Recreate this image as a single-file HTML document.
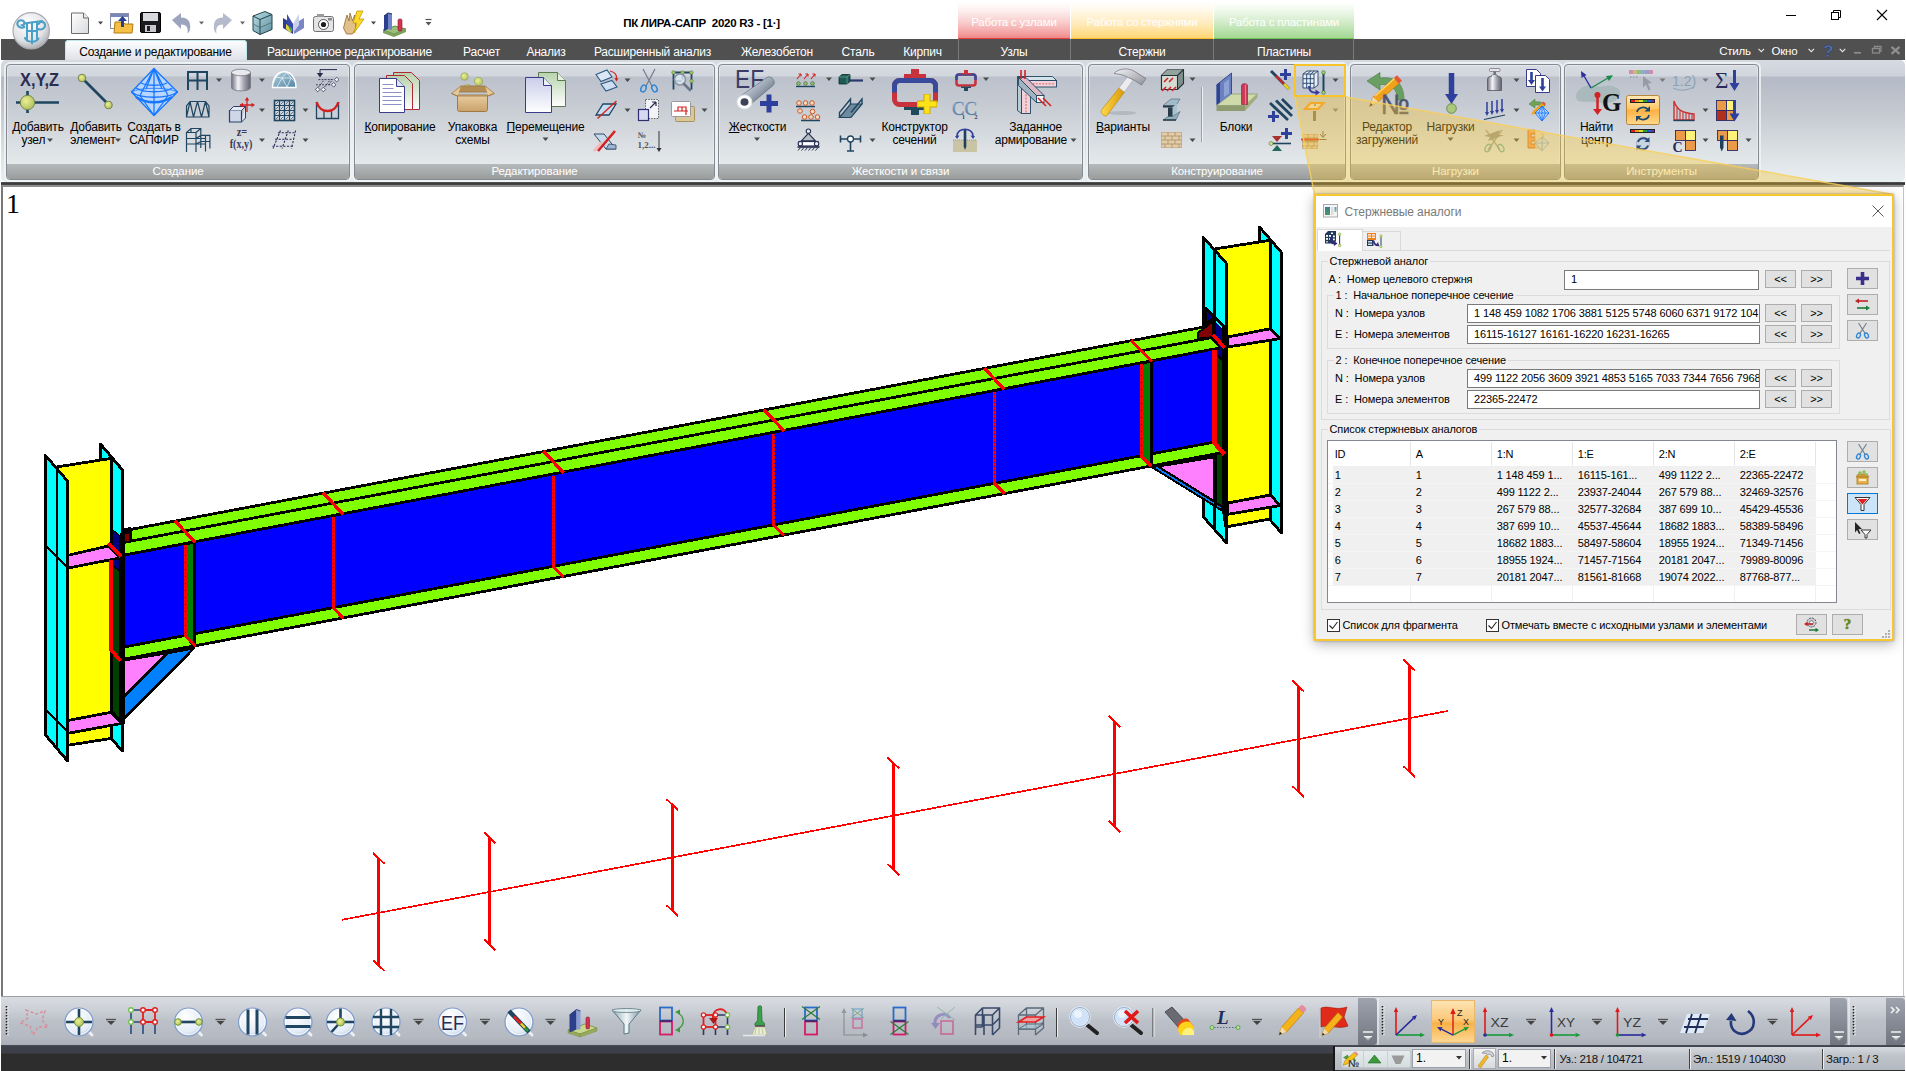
<!DOCTYPE html>
<html lang="ru">
<head>
<meta charset="utf-8">
<title>ПК ЛИРА-САПР 2020 R3</title>
<style>
html,body{margin:0;padding:0;background:#fff;}
body{width:1906px;height:1071px;overflow:hidden;position:relative;font-family:"Liberation Sans",sans-serif;font-size:12px;color:#000;}
.abs{position:absolute;}
#app{position:absolute;left:0;top:0;width:1906px;height:1071px;overflow:hidden;background:#fff;}
/* title bar */
#titlebar{position:absolute;left:0;top:0;width:1906px;height:39px;background:#fff;}
#title{position:absolute;left:561.5px;top:17px;width:280px;text-align:center;font-size:11.5px;font-weight:bold;color:#000;white-space:pre;letter-spacing:-0.25px;}
.ctx{position:absolute;top:2px;height:37px;color:#fff;font-size:11.5px;text-align:center;line-height:41px;letter-spacing:-0.2px;white-space:nowrap;}
/* tab bar */
#tabbar{position:absolute;left:1px;top:39px;width:1904px;height:21px;background:#505050;}
.tab{position:absolute;top:43.5px;height:16px;line-height:16px;color:#fff;font-size:12px;letter-spacing:-0.22px;white-space:nowrap;transform:translateX(-50%);}
#acttab{position:absolute;left:65px;top:40px;width:182px;height:21px;border-radius:4px 4px 0 0;background:linear-gradient(#fdfeff,#eef0f4 50%,#dde0e6);box-shadow:0 0 0 1px #bfe8ee inset;}
/* ribbon */
#ribbon{position:absolute;left:1px;top:60px;width:1904px;height:122px;border-radius:5px;background:linear-gradient(#d6dae1 0px,#cdd2da 16px,#b4bac6 17px,#c3c8d0 50px,#dde2e5 95px,#e8eff1 121px);}
#ribbonshadow{position:absolute;left:1px;top:182px;width:1904px;height:3px;background:linear-gradient(#5a5a5a,#3a3a3a 50%,#4a4a4a);}
.grp{position:absolute;top:64px;height:116px;border-radius:4px;box-sizing:border-box;border:1px solid #858a90;box-shadow:0 0 0 1px rgba(255,255,255,.35) inset, 0 0 0 2px rgba(240,246,247,.8);background:linear-gradient(rgba(255,255,255,.10),rgba(255,255,255,.10));overflow:hidden;}
.grp .cap{position:absolute;left:0;right:0;bottom:0;height:15px;background:linear-gradient(#b6baba,#9a9c9c);color:#fff;font-size:11.5px;text-align:center;line-height:14px;letter-spacing:-0.1px;}
.lbl{position:absolute;font-size:12px;line-height:13px;text-align:center;white-space:nowrap;transform:translateX(-50%);letter-spacing:-0.2px;color:#000;}
.dd{position:absolute;width:0;height:0;border-left:3px solid transparent;border-right:3px solid transparent;border-top:3px solid #555;margin-left:-3px;box-shadow:none;}
.ico{position:absolute;overflow:visible;}
/* viewport */
#view{position:absolute;left:1px;top:185px;width:1903px;height:811px;background:#fff;border-left:2px solid #777;border-top:2px solid #8f8f8f;border-right:1px solid #c4c4c4;box-sizing:border-box;}
/* bottom */
#btool{position:absolute;left:1px;top:997px;width:1904px;height:49px;background:linear-gradient(#d9dce1 0,#cfd3d9 10px,#bcc1c9 24px,#b4b9c2 40px,#a9aeb7 49px);}
#status{position:absolute;left:1px;top:1045px;width:1904px;height:26px;background:linear-gradient(#4a4d57 0,#3d4049 2px,#3d4049 8px,#2d2d2d 9px,#2d2d2d 100%);}
/* dialog */
#dlg{position:absolute;left:1314px;top:194px;width:580px;height:447px;box-sizing:border-box;border:2px solid #f8c630;background:#f0f0f0;box-shadow:0 3px 12px rgba(0,0,0,.30),0 0 2px rgba(0,0,0,.3);font-size:11px;letter-spacing:-0.12px;}
#dlg .t{position:absolute;white-space:nowrap;line-height:13px;}
#dlg .inp{position:absolute;background:#fff;border:1px solid #7a7a7a;box-sizing:border-box;overflow:hidden;white-space:nowrap;line-height:17px;padding-left:6px;}
#dlg .btn{position:absolute;background:#e1e1e1;border:1px solid #adadad;box-sizing:border-box;text-align:center;line-height:16px;}
#dlg .gb{position:absolute;border:1px solid #dcdcdc;box-sizing:border-box;}
#dlg .gbl{position:absolute;background:#f0f0f0;padding:0 2px;line-height:13px;white-space:nowrap;}
</style>
</head>
<body>
<div id="app">
<div id="titlebar">
 <!-- quick access icons -->
 <svg class="ico" style="left:60px;top:8px" width="400" height="30" viewBox="60 8 400 30">
  <defs>
   <linearGradient id="gdoc" x1="0" y1="0" x2="1" y2="1"><stop offset="0" stop-color="#ffffff"/><stop offset="1" stop-color="#d8dadd"/></linearGradient>
   <linearGradient id="gcube" x1="0" y1="0" x2="1" y2="1"><stop offset="0" stop-color="#b8dfe6"/><stop offset="1" stop-color="#5f8f9c"/></linearGradient>
  </defs>
  <!-- new -->
  <path d="M71.5 13 h12 l5 5 v15.5 h-17z" fill="url(#gdoc)" stroke="#6d6d6d"/><path d="M83.5 13 v5 h5" fill="#eee" stroke="#6d6d6d"/>
  <path d="M98 21.5h5l-2.5 3z" fill="#444"/>
  <!-- open -->
  <rect x="110.500" y="13.500" width="18" height="15" fill="#fff" stroke="#8a8fa8"/><rect x="111" y="14" width="17" height="3" fill="#7a86b8"/>
  <path d="M115 22 l-1 11 h18 l1 -9 h-8 l-2 -2z" fill="#f6c046" stroke="#b07a12"/>
  <path d="M121 27 v-6 h-3 l4.500 -5 l4.500 5 h-3 v6z" fill="#24408e"/>
  <!-- save -->
  <rect x="140.500" y="12.500" width="20" height="20" rx="1.500" fill="#1b1b1f" stroke="#000"/><rect x="143" y="13" width="15" height="8" fill="#d9dadd"/><rect x="145" y="25" width="11" height="7" fill="#c9c9cc"/><rect x="147" y="26" width="3" height="5" fill="#222"/>
  <!-- undo -->
  <path d="M172 20 l9 -7 v4.500 c7 0 10 4 9 12 c-0.500 2 -1.500 3 -2.500 4 c1 -6 -1 -9 -6.500 -9 v4.500z" fill="#8b94b3" opacity=".85"/>
  <path d="M199 21.500h5l-2.500 3z" fill="#666"/>
  <!-- redo -->
  <path d="M232 20 l-9 -7 v4.500 c-7 0 -10 4 -9 12 c0.500 2 1.500 3 2.500 4 c-1 -6 1 -9 6.500 -9 v4.500z" fill="#a3a9c0" opacity=".8"/>
  <path d="M240 21.500h5l-2.500 3z" fill="#666"/>
  <!-- cube -->
  <path d="M253 16 l12 -4.500 l7 3 v15 l-12 5 l-7 -4z" fill="url(#gcube)" stroke="#24424c"/><path d="M253 16 l7 3.500 l12 -5 M260 19.500 v15" fill="none" stroke="#24424c"/><path d="M253 24 l7 3.500 l12 -5" fill="none" stroke="#4a6a74" stroke-width=".8"/>
  <!-- book -->
  <path d="M283 18 l10 6 v10 l-10 -6z" fill="#2d3c94"/><path d="M304 18 l-10 6 v10 l10 -6z" fill="#7b86c6"/><path d="M287 14 l6 10 v9 l-6 -8z" fill="#3a4aa8"/><path d="M299 14 l-6 10 v9 l6 -8z" fill="#c9d0ee"/><path d="M286 24 l6 5 l-1 4 l-5 -4z" fill="#e8d23a"/><path d="M288 26 l4 3 l-1 3z" fill="#3aa84a"/>
  <!-- camera -->
  <rect x="313.500" y="16.500" width="20" height="15" rx="2" fill="#e4e4e6" stroke="#6f7073"/><rect x="317" y="14" width="7" height="3" fill="#9a9b9e"/><circle cx="323.500" cy="24.500" r="5" fill="#fff" stroke="#555"/><circle cx="323.500" cy="24.500" r="2.600" fill="#1c1c20"/><rect x="328" y="18" width="4" height="2.500" fill="#888"/>
  <!-- hand lightning -->
  <path d="M345 22 l2 -7 l2 6 l1 -8 l2.500 8 l2 -6 l1 8 v6 l-3 5 h-6 l-3 -6z" fill="#e2c089" stroke="#8d6b36" stroke-width=".8"/>
  <path d="M357 11 h6 l-4 8 h5 l-10 14 l3 -10 h-4z" fill="#ffd928" stroke="#c29a00" stroke-width=".8"/>
  <path d="M371 21.500h5l-2.500 3z" fill="#444"/>
  <!-- blocks -->
  <path d="M383 30 l12 -4 l11 3 l-12 5z" fill="#9cc07a" stroke="#4f7a32" stroke-width=".8"/><path d="M383 30 v3 l11 4 v-3z M394 34 v3 l12 -5 v-3z" fill="#7ca25c"/>
  <path d="M384 16 l4 -3 v16 l-4 2z" fill="#2c3f8c"/><path d="M388 13 l4 1 v16 l-4 -1z" fill="#6f83c9"/><path d="M384 16 l4 -3 l4 1" fill="none" stroke="#1c2a66"/>
  <rect x="398" y="19" width="4" height="12" rx="1.500" fill="#d0344f" stroke="#8a1a2c" stroke-width=".6"/>
  <!-- customize -->
  <path d="M425.500 19.500h6" stroke="#555" stroke-width="1.200"/><path d="M425.500 22 h6 l-3 3.500z" fill="#555"/>
 </svg>
 <div id="title">ПК ЛИРА-САПР  2020 R3 - [1·]</div>
 <div class="ctx" style="left:958px;width:112px;background:linear-gradient(#fff 0,#fdeeee 25%,#f9cccc 55%,#f3a0a0 85%,#f08a8a 96%,#e84040 97%,#e84040 100%);">Работа с узлами</div>
 <div class="ctx" style="left:1071px;width:142px;background:linear-gradient(#fff 0,#fff8e6 25%,#ffecc0 55%,#ffdd8c 85%,#ffd676 96%,#f7bd28 97%,#f7bd28 100%);">Работа со стержнями</div>
 <div class="ctx" style="left:1214px;width:140px;background:linear-gradient(#fff 0,#eef8ea 25%,#d2ecc9 55%,#b0dea2 85%,#a4d996 96%,#70c656 97%,#70c656 100%);">Работа с пластинами</div>
 <!-- window controls -->
 <svg class="ico" style="left:1770px;top:0" width="136" height="32" viewBox="1770 0 136 32">
  <path d="M1786 15.500h10" stroke="#000" stroke-width="1"/>
  <rect x="1831.500" y="12.500" width="7" height="7" fill="#fff" stroke="#000"/><path d="M1833.500 12.500v-2h7v7h-2" fill="none" stroke="#000"/>
  <path d="M1877 10 l10 10 M1887 10 l-10 10" stroke="#000" stroke-width="1.100"/>
 </svg>
</div>
<div id="tabbar"></div>
<div id="acttab"></div>
<div class="tab" style="left:155.500px;color:#000">Создание и редактирование</div>
<div class="tab" style="left:349.500px">Расширенное редактирование</div>
<div class="tab" style="left:481.500px">Расчет</div>
<div class="tab" style="left:546px">Анализ</div>
<div class="tab" style="left:652.500px">Расширенный анализ</div>
<div class="tab" style="left:777px">Железобетон</div>
<div class="tab" style="left:858px">Сталь</div>
<div class="tab" style="left:922.500px">Кирпич</div>
<div class="tab" style="left:1014px">Узлы</div>
<div class="tab" style="left:1142px">Стержни</div>
<div class="tab" style="left:1284px">Пластины</div>
<div class="abs" style="left:958px;top:39px;width:1px;height:21px;background:#7a7a7a"></div>
<div class="abs" style="left:1070px;top:39px;width:1px;height:21px;background:#7a7a7a"></div>
<div class="abs" style="left:1213px;top:39px;width:1px;height:21px;background:#7a7a7a"></div>
<div class="abs" style="left:1353px;top:39px;width:1px;height:21px;background:#7a7a7a"></div>
<div class="tab" style="left:1735px;top:42.5px;font-size:11.5px">Стиль</div>
<div class="tab" style="left:1784.500px;top:42.5px;font-size:11.5px">Окно</div>
<svg class="ico" style="left:1750px;top:40px" width="156" height="20" viewBox="1750 40 156 20">
 <path d="M1758.500 48.800l2.800 2.800l2.800-2.800M1808.500 48.800l2.800 2.800l2.800-2.800M1839.700 48.800l2.800 2.800l2.800-2.800" fill="none" stroke="#e8e8e8" stroke-width="1.100"/>
 <text x="1823" y="56.500" font-family="Liberation Sans, sans-serif" font-size="17" font-weight="bold" fill="#5873ad" stroke="#2a3c68" stroke-width=".5">?</text>
 <path d="M1854 52.800h7" stroke="#8a8a8a" stroke-width="1.800"/>
 <rect x="1872.500" y="48.500" width="7" height="4.500" fill="none" stroke="#8a8a8a" stroke-width="1.300"/><path d="M1874.500 48v-1.500h6.500v4.500h-1.500" fill="none" stroke="#8a8a8a" stroke-width="1.300"/>
 <path d="M1891.500 46.800l8 7M1899.500 46.800l-8 7" stroke="#8f8f8f" stroke-width="2.200"/>
</svg>
<!-- app button -->
<svg class="ico" style="left:8px;top:6px" width="48" height="48" viewBox="8 6 48 48">
 <defs><radialGradient id="gapp" cx=".4" cy=".3" r=".8"><stop offset="0" stop-color="#ffffff"/><stop offset=".6" stop-color="#e2e3e6"/><stop offset="1" stop-color="#9a9ca3"/></radialGradient></defs>
 <circle cx="31.200" cy="30.800" r="18.200" fill="url(#gapp)" stroke="#a8abb2" stroke-width="1.200"/>
 <g fill="none" stroke="#4aa0c8" stroke-width="2" stroke-linecap="round"><path d="M24.500 27c-4 2-8-1-7-4.500c1-3 6-3 7 0c.5 2-1.500 3.500-3 2.500"/><path d="M24 23.500l18-2.500"/><path d="M27 23.500v17M32 22.500v21M37 22v18"/><path d="M38 29c4 1.500 7.500-1 7-4.500c-.5-3-5-3.500-6.500-.5"/><path d="M25 38c1.500 4.500 11 5 13.500 .5"/><path d="M27 31h10"/></g>
 </svg>
<div id="ribbon"></div>
<div id="ribbonshadow"></div>
<div class="grp" style="left:6px;width:344px"><div class="cap">Создание</div></div>
<div class="grp" style="left:354px;width:361px"><div class="cap">Редактирование</div></div>
<div class="grp" style="left:718px;width:365px"><div class="cap">Жесткости и связи</div></div>
<div class="grp" style="left:1088px;width:258px"><div class="cap">Конструирование</div></div>
<div class="grp" style="left:1350px;width:211px"><div class="cap">Нагрузки</div></div>
<div class="grp" style="left:1564px;width:195px"><div class="cap">Инструменты</div></div>
<!-- labels -->
<div class="lbl" style="left:38px;top:121px">Добавить<br>узел&nbsp;&nbsp;&nbsp;</div>
<div class="lbl" style="left:96px;top:121px">Добавить<br>элемент&nbsp;&nbsp;</div>
<div class="lbl" style="left:154px;top:121px">Создать в<br>САПФИР</div>
<div class="lbl" style="left:400px;top:121px"><u>К</u>опирование</div>
<div class="lbl" style="left:472.500px;top:121px">Упаковка<br>схемы</div>
<div class="lbl" style="left:545.500px;top:121px"><u>П</u>еремещение</div>
<div class="lbl" style="left:757.500px;top:121px"><u>Ж</u>есткости</div>
<div class="lbl" style="left:914.500px;top:121px">Конструктор<br>сечений</div>
<div class="lbl" style="left:1034px;top:121px">&nbsp;Заданное<br>армирование&nbsp;&nbsp;</div>
<div class="lbl" style="left:1123px;top:121px"><u>В</u>арианты</div>
<div class="lbl" style="left:1236px;top:121px">Блоки</div>
<div class="lbl" style="left:1387px;top:121px">Редактор<br>загружений</div>
<div class="lbl" style="left:1450.500px;top:121px">Нагрузки</div>
<div class="lbl" style="left:1596.500px;top:121px">Найти<br>центр</div>
<svg class="ico" style="left:0;top:60px" width="1906" height="122" viewBox="0 60 1906 122">
<defs>
 <radialGradient id="gnode" cx=".4" cy=".4" r=".7"><stop offset="0" stop-color="#eef08f"/><stop offset="1" stop-color="#a9b85e"/></radialGradient>
 <linearGradient id="gcyl" x1="0" y1="0" x2="1" y2="0"><stop offset="0" stop-color="#70707e"/><stop offset=".35" stop-color="#f4f4f8"/><stop offset=".7" stop-color="#9a9aa8"/><stop offset="1" stop-color="#60606e"/></linearGradient><linearGradient id="gdome" x1="0" y1="0" x2="1" y2="1"><stop offset="0" stop-color="#b4d2de"/><stop offset="1" stop-color="#4f84a4"/></linearGradient>
 <linearGradient id="gpage" x1="0" y1="0" x2="0" y2="1"><stop offset="0" stop-color="#c9cdea"/><stop offset="1" stop-color="#ffffff"/></linearGradient>
 <linearGradient id="gpageg" x1="0" y1="0" x2="0" y2="1"><stop offset="0" stop-color="#b7d3ad"/><stop offset="1" stop-color="#ffffff"/></linearGradient>
 <linearGradient id="gbox" x1="0" y1="0" x2="0" y2="1"><stop offset="0" stop-color="#e9cda0"/><stop offset="1" stop-color="#c9a26a"/></linearGradient>
 <linearGradient id="gpipe" x1="0" y1="0" x2="1" y2="1"><stop offset="0" stop-color="#ffffff"/><stop offset=".5" stop-color="#9aa6b4"/><stop offset="1" stop-color="#3a4654"/></linearGradient>
 <linearGradient id="gham" x1="0" y1="0" x2="1" y2="0"><stop offset="0" stop-color="#ffd84a"/><stop offset="1" stop-color="#d99a08"/></linearGradient>
 <linearGradient id="gsteel" x1="0" y1="0" x2="1" y2="1"><stop offset="0" stop-color="#f4f4f6"/><stop offset="1" stop-color="#8e9098"/></linearGradient>
 <linearGradient id="gorbtn" x1="0" y1="0" x2="0" y2="1"><stop offset="0" stop-color="#ffe9b8"/><stop offset=".45" stop-color="#ffc867"/><stop offset=".5" stop-color="#fdb042"/><stop offset="1" stop-color="#ffd98c"/></linearGradient>
 <linearGradient id="gcc" x1="0" y1="0" x2="0" y2="1"><stop offset="0" stop-color="#a8cce6"/><stop offset="1" stop-color="#3f6290"/></linearGradient>
 <path id="dd" d="M-3 -1.500h6l-3 3.500z" fill="#4a4a4a"/>
</defs>
<!-- ===== group 1 ===== -->
<text x="20" y="85.500" font-family="Liberation Sans, sans-serif" font-weight="bold" font-size="17.500" fill="#2a2c50" textLength="39" lengthAdjust="spacingAndGlyphs">X,Y,Z</text>
<path d="M16 102.500H59M27.500 91V113" stroke="#1f4560" stroke-width="2.600" fill="none"/>
<circle cx="27.500" cy="102.500" r="7.200" fill="url(#gnode)" stroke="#73894d" stroke-width="1"/>
<path d="M82 78L108.500 104.500" stroke="#1f4560" stroke-width="2.600"/>
<circle cx="82" cy="78" r="3.800" fill="url(#gnode)" stroke="#73894d"/><circle cx="108.500" cy="105" r="3.800" fill="url(#gnode)" stroke="#73894d"/>
<!-- sapfir diamond -->
<g stroke="#1877ff" stroke-width="1.300" fill="none" stroke-linejoin="round">
 <path d="M154 68.500L131.500 92L154 115.500L177.500 92Z" fill="#b9d6ff"/>
 <path d="M154 68.500L140 95.500M154 68.500L154 97M154 68.500L168 95.500M154 68.500L146 89 M154 68.500 L162 89"/>
 <path d="M154 115.500L140 95.500M154 115.500V97M154 115.500L168 95.500"/>
 <path d="M131.500 92C140 99 168 99 177.500 92"/><path d="M136 88C144 93 164 93 172.500 88"/><path d="M141 83C147 86 161 86 167 83"/>
 <path d="M136 97C146 104 162 104 172 97" stroke-width="2.600"/>
 <path d="M131.500 92C140 87 168 87 177.500 92" stroke-width=".8"/>
</g>
<!-- col1 -->
<path d="M188 90V72H207V90M197.500 72V90M188 80.500H207" fill="none" stroke="#1f4560" stroke-width="2"/>
<use href="#dd" x="219" y="80"/>
<path d="M186.500 117V106L190 101.500H205.500L209 106V117ZM186.500 117L190 101.500L193.500 117L197.500 101.500L201.500 117L205.500 101.500L209 117" fill="none" stroke="#1f4560" stroke-width="1.200"/>
<g fill="none" stroke="#1f4560" stroke-width="1.200"><path d="M186.500 152V132.500H196V152M186.500 132.500L191 128.500H200.800V148M196 132.500L200.800 128.500M186.500 138.500H196L200.800 135.400H209.900V148.500M186.500 144H196L200.800 141.500H209.900M205.500 135.400V151.500M196 138.500h9.500M196 144h9.500M191 128.500v4"/></g>
<!-- col2 -->
<path d="M231.500 72.500V87.500C231.500 92 250.500 92 250.500 87.500V72.500" fill="url(#gcyl)" stroke="#77777f" stroke-width=".8"/><ellipse cx="241" cy="72.500" rx="9.500" ry="3.300" fill="#e8e8ee" stroke="#77777f" stroke-width=".8"/>
<use href="#dd" x="262" y="80"/>
<path d="M229.500 110.500h12v11.500h-12z" fill="#cfd6e6" stroke="#27406a" stroke-width="1.200"/><path d="M229.500 110.500l4-4h12l-4 4M245.500 106.500v11.500l-4 4" fill="#e6eaf2" stroke="#27406a" stroke-width="1"/>
<path d="M247 98v14M240 105h14" stroke="#d32222" stroke-width="1.300"/><path d="M247 97l-2.300 3.500h4.600zM255 105l-3.500-2.300v4.600zM239.500 105l3.500-2.300v4.600z" fill="#d32222"/>
<use href="#dd" x="262" y="110"/>
<text x="242" y="136" text-anchor="middle" font-family="Liberation Serif, serif" font-weight="bold" font-size="12" fill="#3a3a58" textLength="10.500" lengthAdjust="spacingAndGlyphs">z=</text>
<text x="241" y="147.500" text-anchor="middle" font-family="Liberation Serif, serif" font-weight="bold" font-size="13.500" fill="#3a3a58" textLength="22.500" lengthAdjust="spacingAndGlyphs">f(x,y)</text>
<use href="#dd" x="262" y="140"/>
<!-- col3 -->
<path d="M272.500 87.500C272.500 66.500 296 66.500 296 87.500Z" fill="url(#gdome)" stroke="#fff" stroke-width="1.400"/>
<path d="M277 87l5-9l5 9M282 78l-6-1M282 78l4.500-5.500M286.500 72.500l4.500 5.500l-9 0M291 78l-4 9M291 78l4.500 4M276 77l-2.500 6M276 77l5-4.500" fill="none" stroke="#fff" stroke-width=".7" opacity=".9"/>
<rect x="274.500" y="100.500" width="20" height="20" fill="#e4e8ee" fill-opacity=".5"/><g stroke="#1f4560" fill="none"><rect x="274.500" y="100.500" width="20" height="20" stroke-width="1.600"/><path d="M279.500 100.500v20M284.500 100.500v20M289.500 100.500v20M274.500 105.500h20M274.500 110.500h20M274.500 115.500h20" stroke-width="1.200"/><path d="M275.7 104.3l2.600-2.600M275.7 109.3l2.600-2.600M275.7 114.3l2.600-2.600M275.7 119.3l2.600-2.600M280.7 104.3l2.600-2.600M280.7 109.3l2.600-2.600M280.7 114.3l2.600-2.600M280.7 119.3l2.600-2.600M285.7 104.3l2.600-2.600M285.7 109.3l2.600-2.600M285.7 114.3l2.600-2.600M285.7 119.3l2.600-2.600M290.7 104.3l2.600-2.600M290.7 109.3l2.600-2.600M290.7 114.3l2.600-2.600M290.7 119.3l2.600-2.600" stroke-width=".7"/></g><g fill="#1f4560"><circle cx="279.500" cy="105.500" r="1.100"/><circle cx="289.500" cy="105.500" r="1.100"/><circle cx="284.500" cy="110.500" r="1.100"/><circle cx="279.500" cy="115.500" r="1.100"/><circle cx="289.500" cy="115.500" r="1.100"/></g>
<use href="#dd" x="305.500" y="110"/>
<g stroke="#2a2a5a" stroke-width="1.100" fill="none" stroke-dasharray="2.200 1.400"><path d="M278 132.800H296M275 139.300H294M272.500 146.300H293"/><path d="M280.500 130.500L273 148.500M288.300 130.500L282 148.500M295.600 130.500L291.500 148.500"/></g>
<use href="#dd" x="305.500" y="140"/>
<!-- col4 -->
<path d="M320 69.600H337M320 69.600v4.500" stroke="#2a2a4a" stroke-width="1" fill="none"/><path d="M320 77.500l-3.200-4.500h6.400z" fill="#2a2a4a"/>
<g stroke="#2a2a4a" stroke-width=".9" fill="none" stroke-dasharray="1.800 1.300"><path d="M318.500 79.600h14M316 84.800h14M316.500 89.500l8-10M322.500 89.500l8-10M328.500 85l4-5.400"/></g>
<g fill="#eef0f4" stroke="#2a2a4a" stroke-width=".7"><path d="M336.700 77.300l2.300 2.300l-2.300 2.300l-2.300-2.300z"/><path d="M333.700 82.500l2.300 2.300l-2.300 2.300l-2.300-2.300z"/><path d="M317.700 87.200l2.300 2.300l-2.300 2.300l-2.300-2.300z"/><path d="M323.300 87.200l2.300 2.300l-2.300 2.300l-2.300-2.300z"/></g>
<path d="M316.500 104V118.500H338.500V104M324 111V118.500M331.500 111V118.500" fill="none" stroke="#1f4560" stroke-width="1.300"/>
<path d="M316.500 102C320 114 335 114 338.500 102" fill="none" stroke="#d32222" stroke-width="2.600"/>
<!-- ===== group 2 ===== -->
<g stroke-width="1">
 <path d="M393.500 72.500h18l8 8v29h-26z" fill="url(#gpageg)" stroke="#b02a35"/>
 <path d="M386.500 75.500h18l8 8v26h-26z" fill="url(#gpageg)" stroke="#b02a35"/>
 <path d="M379.500 78.500h17l8 8v26h-25z" fill="#fff" stroke="#3b3b8c"/><path d="M396.500 78.500v8h8" fill="#dfe2f2" stroke="#3b3b8c"/>
 <path d="M382.500 84.500h11M382.500 88.500h11M382.500 92.500h19M382.500 96.500h19M382.500 100.500h19M382.500 104.500h19" stroke="#8d90c9"/>
</g>
<use href="#dd" x="400" y="139"/>
<!-- box -->
<circle cx="464.500" cy="76.500" r="3.800" fill="url(#gnode)" stroke="#8aa05a" stroke-width=".6"/><circle cx="478.500" cy="81.500" r="4.200" fill="url(#gnode)" stroke="#8aa05a" stroke-width=".6"/><circle cx="467.500" cy="88" r="3.600" fill="url(#gnode)" stroke="#8aa05a" stroke-width=".6"/>
<path d="M455 92l6-6h24l6 6z" fill="#b48d55" stroke="#9a7440" stroke-width=".8"/>
<path d="M457.500 95h30v14.500c0 1.500-1 2-2 2h-26c-1 0-2-.5-2-2z" fill="url(#gbox)" stroke="#a07a44"/>
<path d="M461 86l-9.500 7.500l6 2.500M485 86l9.500 7.500l-6 2.500" fill="#e6c995" stroke="#a07a44" stroke-width=".8"/>
<path d="M451.500 93.500l6 2.500h30l6-2.500" fill="none" stroke="#a07a44" stroke-width=".8"/>
<!-- move -->
<path d="M538.500 72.500h19l8 8v26h-27z" fill="url(#gpageg)" stroke="#5b7a4e"/><path d="M557.500 72.500v8h8" fill="#e4eedf" stroke="#5b7a4e"/>
<path d="M525.500 77.500h18l8 8v27h-26z" fill="url(#gpage)" stroke="#3b3b8c"/><path d="M543.500 77.500v8h8" fill="#eceefa" stroke="#3b3b8c"/>
<use href="#dd" x="545.500" y="139"/>
<!-- small col1 -->
<path d="M596 74.500l11-4.500l5 7l-11 4.500z" fill="#dce8f6" stroke="#2c5a85" stroke-width="1.100"/><path d="M601 84l11-3.500l5 6.500l-11 4z" fill="#cfdff2" stroke="#2c5a85" stroke-width="1.100"/>
<path d="M610 71c5 1 7 4 6.500 8" fill="none" stroke="#d32222" stroke-width="1.200"/><path d="M616.500 81.500l-2.200-3.500l4.200.3z" fill="#d32222"/>
<use href="#dd" x="627.500" y="80"/>
<path d="M596 115l7-11h13l-7 11z" fill="#c7dcf0" stroke="#1f4560" stroke-width="1.300"/><path d="M597.500 118.500l19-17.500" stroke="#d32222" stroke-width="1.400"/>
<use href="#dd" x="627.500" y="110"/>
<path d="M594 134h10l12 15h-10z" fill="#c9d9ea" stroke="#2c4a6a" stroke-width="1"/><path d="M606 149l3-5l7 1v4z" fill="#9db7cf" stroke="#2c4a6a" stroke-width=".8"/><path d="M598 151l17-20" stroke="#d32222" stroke-width="2.600"/><path d="M594 151l8-9" stroke="#f0b8b8" stroke-width="2.600"/>
<!-- col2 -->
<g fill="none" stroke="#6f7d8c" stroke-width="1.200"><path d="M643 69l9 17M655 69l-9 17"/></g>
<ellipse cx="643.500" cy="88.500" rx="2.500" ry="3.500" transform="rotate(25 643.500 88.500)" fill="none" stroke="#2e86d6" stroke-width="1.500"/><ellipse cx="654.500" cy="88.500" rx="2.500" ry="3.500" transform="rotate(-25 654.500 88.500)" fill="none" stroke="#2e86d6" stroke-width="1.500"/>
<rect x="645.500" y="99.500" width="13" height="19" fill="#f2f4f8" stroke="#555" stroke-dasharray="1.500 1.200" stroke-width=".9"/><rect x="638.500" y="109.500" width="10" height="11" fill="#d6daf0" stroke="#2e2e6e" stroke-width="1.200"/><path d="M650 108l6-6M656 102h-4M656 102v4" stroke="#2a2a4a" stroke-width="1.200" fill="none"/>
<text x="637.500" y="137.500" font-family="Liberation Serif, serif" font-weight="bold" font-size="8.500" fill="#555">№</text><text x="637.500" y="147.500" font-family="Liberation Serif, serif" font-weight="bold" font-size="9" fill="#555">1,2...</text>
<path d="M659 131v18" stroke="#333" stroke-width="1"/><path d="M659 152l-2.500-4h5z" fill="#333"/>
<!-- col3 -->
<path d="M673.500 72.500h18v17M673.500 72.500v17M682.500 72.500v7M673.500 81h8" fill="none" stroke="#1f4560" stroke-width="1.800"/><g fill="#9fc46a" stroke="#5a7a3a" stroke-width=".5"><circle cx="673.500" cy="72.500" r="1.800"/><circle cx="682.500" cy="72.500" r="1.800"/><circle cx="691.500" cy="72.500" r="1.800"/><circle cx="691.500" cy="81" r="1.800"/></g>
<circle cx="680" cy="79.500" r="5.500" fill="#dfeaf5" fill-opacity=".8" stroke="#8a96a6" stroke-width="1.600"/><path d="M684 84l6 6" stroke="#6a7686" stroke-width="2.600" stroke-linecap="round"/>
<rect x="675.500" y="106.500" width="19" height="15" rx="1" fill="#d9c79a" stroke="#a8925e"/><rect x="671.500" y="101.500" width="19" height="15" rx="1" fill="#fdfdfd" stroke="#9a9a9a"/><path d="M674 111h14M678 111v-4h8v8M682 107v4" fill="none" stroke="#d32222" stroke-width="1.200"/>
<use href="#dd" x="704.500" y="110"/>
<!-- label dropdowns -->
<use href="#dd" x="50" y="140"/><use href="#dd" x="118" y="140"/><use href="#dd" x="1073.500" y="140"/>
<!-- ===== group 3 ===== -->
<text x="735" y="88" font-family="Liberation Sans, sans-serif" font-size="25" fill="#3a3c66" textLength="29" lengthAdjust="spacingAndGlyphs">EF</text>
<path d="M740 96.500L767 77.500C771 74.500 777 82 773 85.500L748 106.500Z" fill="url(#gpipe)" stroke="#5a6674" stroke-width=".6"/>
<ellipse cx="744.500" cy="102" rx="7.500" ry="7" fill="#fff" stroke="#dfe3e8" stroke-width="1"/><ellipse cx="744.500" cy="102" rx="4" ry="3.800" fill="#3c4258"/>
<path d="M760 103.500h18M769 94.500v18" stroke="#2f3f9c" stroke-width="5"/>
<use href="#dd" x="757" y="139"/>
<!-- col1 -->
<path d="M796 86.500h19" stroke="#1f4560" stroke-width="1.400"/><g fill="#8fc46a" stroke="#3f6a3a" stroke-width=".7"><circle cx="798.500" cy="83.500" r="1.800"/><circle cx="805.500" cy="83.500" r="1.800"/><circle cx="812.500" cy="83.500" r="1.800"/></g>
<g stroke="#d32222" stroke-width="1.100" fill="none"><path d="M797 79l4-5M804 79l4-5M811 79l4-5"/><path d="M801 74h-2.500M801 74v2.500M808 74h-2.500M808 74v2.500M815 74h-2.500M815 74v2.500"/></g>
<use href="#dd" x="829" y="79"/>
<path d="M796 106.500h19M801 120.500h19" stroke="#1f4560" stroke-width="1.400"/><g fill="#f4d8c0" stroke="#c85a2a" stroke-width="1"><circle cx="799" cy="103" r="2.300"/><circle cx="805.500" cy="103" r="2.300"/><circle cx="812" cy="103" r="2.300"/><circle cx="800" cy="111" r="2.300"/><circle cx="812.500" cy="111.500" r="2.300"/><circle cx="804.500" cy="117" r="2.300"/><circle cx="811" cy="117" r="2.300"/><circle cx="817.500" cy="117" r="2.300"/></g>
<path d="M808.400 133.300l-7 7.500h14z" fill="#b5bcc6" stroke="#2a3050" stroke-width="1.200"/><rect x="799" y="141.500" width="19" height="4.500" fill="#fff" stroke="#2a3050" stroke-width="1.200"/><circle cx="808.400" cy="131.200" r="2.200" fill="#e6f2f8" stroke="#2a3050" stroke-width="1.100"/><circle cx="800.300" cy="143.700" r="2.200" fill="#e6f2f8" stroke="#2a3050" stroke-width="1.100"/><circle cx="816.600" cy="143.700" r="2.200" fill="#e6f2f8" stroke="#2a3050" stroke-width="1.100"/><path d="M797.500 147h22" stroke="#2a3050" stroke-width="1.600"/><path d="M798 150.500l2.500-3M801.500 150.500l2.500-3M805 150.500l2.500-3M808.500 150.500l2.500-3M812 150.500l2.500-3M815.500 150.500l2.500-3" stroke="#2a3050" stroke-width="1"/>
<!-- col2 -->
<path d="M839 77l3-2.500h8v7l-3 2.500h-8z" fill="#1c5a52" stroke="#0f2f2c" stroke-width=".8"/><path d="M839 77h8v7M847 77l3-2.500" fill="none" stroke="#6fb0a6" stroke-width=".7"/><path d="M850 80.500h13" stroke="#2a3a6a" stroke-width="2.200"/>
<use href="#dd" x="872.500" y="79"/>
<path d="M839.500 117.500l11-13.500h11.500l-11 13.500z" fill="#6f8a9c" stroke="#1f4560" stroke-width="1.200"/><path d="M839.500 117.500v-5l11-13.500v5M862 104v-5l-11 13.500" fill="none" stroke="#1f4560" stroke-width="1.400"/>
<path d="M840.500 139h20M850.500 142v9M840.500 135.500v7M860.500 135.500v7M847 151h7" stroke="#1f4560" stroke-width="1.600" fill="none"/><circle cx="850.500" cy="139" r="3" fill="#fff" stroke="#1f4560" stroke-width="1.300"/>
<use href="#dd" x="872.500" y="140"/>
<!-- section constructor -->
<path d="M911 69v5h-7v4h22v-4h-7v-5z" fill="#c8323c"/><path d="M904 106v4h7v5h8v-5h7v-4z" fill="#1f4a5e"/>
<rect x="894.500" y="80.500" width="41" height="24" rx="5" fill="none" stroke="#c8323c" stroke-width="5"/>
<path d="M894.500 92.500v-7a5 5 0 0 1 5-5h31a5 5 0 0 1 5 5v7" fill="none" stroke="#3a4a9a" stroke-width="5"/>
<path d="M892 85c0-5 3-7 7-7M938 85c0-5-3-7-7-7" fill="none" stroke="#c8323c" stroke-width="0"/>
<path d="M917 104h20M927 94v20" stroke="#c9a800" stroke-width="7"/><path d="M917.500 104h19M927 94.500v19" stroke="#ffe21a" stroke-width="5"/>
<!-- col3 -->
<rect x="956.500" y="74.500" width="19" height="11" rx="2.500" fill="none" stroke="#c8323c" stroke-width="2.600"/><path d="M956.500 80v-3a2.500 2.500 0 0 1 2.500-2.500h14a2.500 2.500 0 0 1 2.500 2.500v3" fill="none" stroke="#3a4a9a" stroke-width="2.600"/><path d="M964 70h4v3h3v1.500h-10v-1.500h3z" fill="#c8323c"/><path d="M961 86.500h10v1.500h-3v3h-4v-3h-3z" fill="#1f4a5e"/>
<use href="#dd" x="986" y="79"/>
<text x="952" y="115" font-family="Liberation Serif, serif" font-size="19" fill="url(#gcc)" stroke="#5a80a8" stroke-width=".3" textLength="25" lengthAdjust="spacingAndGlyphs">CC</text><text x="962" y="118.500" font-family="Liberation Serif, serif" font-size="6" font-weight="bold" fill="#2a3a6a">1</text><text x="974.500" y="118.500" font-family="Liberation Serif, serif" font-size="6" font-weight="bold" fill="#2a3a6a">2</text>
<rect x="953" y="140" width="24" height="12" fill="#c9c4a4"/><path d="M953 140h24" stroke="#8a865e" stroke-width=".8" stroke-dasharray="1 1"/><path d="M965 130v16" stroke="#1f3f5c" stroke-width="2.600"/><path d="M965 150l-1.500-4h3z" fill="#1f3f5c"/><path d="M957 136c0-9 16-9 16 0" fill="none" stroke="#2f3f9c" stroke-width="1.600"/><path d="M955 136l4.500-.5l-2.500 3.500zM975 136l-4.500-.5l2.500 3.500z" fill="#2f3f9c"/>
<!-- reinforcement -->
<g>
<path d="M1017.500 76.500h35l4 4h-35z" fill="#d4e2ea" stroke="#1f4560" stroke-width=".9"/>
<rect x="1021.500" y="80.500" width="35" height="6.500" fill="#f2d2d8" stroke="#1f4560" stroke-width=".9"/>
<path d="M1023 83.700h32" stroke="#e08a98" stroke-width="1.600" stroke-dasharray="2 1.200"/>
<path d="M1017.500 76.500l4 4v33l-4-3z" fill="#b8ccd6" stroke="#1f4560" stroke-width=".9"/>
<rect x="1021.500" y="87" width="9" height="26.500" fill="#f2d2d8" stroke="#1f4560" stroke-width=".9"/>
<path d="M1026 88v25" stroke="#e08a98" stroke-width="1.600" stroke-dasharray="2 1.200"/>
<path d="M1018.500 77.500l18 18h7.500l-18-18z" fill="#dbb8c4" stroke="#1f4560" stroke-width=".9"/>
<path d="M1018.500 77.500l18 18v7l-18-17z" fill="#9fb4c0" stroke="#1f4560" stroke-width=".9"/>
<rect x="1036.500" y="95.500" width="7.500" height="7" fill="#f4f6f8" stroke="#1f4560" stroke-width=".9"/>
<path d="M1021 70v9M1025 70v9" stroke="#d32222" stroke-width="1.600"/>
<path d="M1038 98l8 8M1043 98l8 8" stroke="#d32222" stroke-width="1.600"/>
</g>
<!-- ===== group 4 ===== -->
<ellipse cx="1122" cy="113" rx="14" ry="2" fill="#8a9098" opacity=".35"/>
<path d="M1101.500 110L1119 88L1124.500 92L1107 115.500C1105 117.500 1099.500 113 1101.500 110z" fill="url(#gham)" stroke="#b88208" stroke-width=".6"/>
<path d="M1119 88L1128 76L1133 80L1124.500 92z" fill="#ececf0" stroke="#9a9ca4" stroke-width=".5"/>
<path d="M1114 73.500C1118 69 1126 67.500 1133 70.500L1146 78.500L1141.500 85L1137 82C1133 79 1130 78.500 1126 76.500C1122 74.500 1118 74 1114 73.500z" fill="url(#gsteel)" stroke="#6e7078" stroke-width=".7"/>
<!-- col -->
<path d="M1161.500 75.500l6-6h16v14l-6 6h-16z" fill="#7f908c" stroke="#27323a" stroke-width="1.100"/><path d="M1161.500 75.500l6-6h16l-6 6z" fill="#93a49c"/><rect x="1161.500" y="75.500" width="16" height="14" fill="#d2dcd2"/><path d="M1161.500 75.500h16v14h-16zM1177.500 75.500l6-6" fill="none" stroke="#27323a" stroke-width="1.100"/><path d="M1164 82l4-4M1169 82l4-4M1162 91l4-4M1167 91l4-4M1172 91l4-4" stroke="#d32222" stroke-width="1.600"/>
<use href="#dd" x="1192.500" y="79"/>
<path d="M1163 105.500l8-6.500h9l-4 6.500z" fill="#9fbcc8" stroke="#3a4a58" stroke-width=".5"/><rect x="1163" y="105.500" width="13" height="2" fill="#2a3a48"/><path d="M1172 107.500l5-4v9.500l-5 4z" fill="#a8c4d0"/><rect x="1168" y="107.500" width="4.500" height="9.500" fill="#2a3a48"/><path d="M1163 120l5-3.500h4.500l7.500-5l-4 8.500z" fill="#8fb0bc" stroke="#3a4a58" stroke-width=".5"/><path d="M1163 120h13" stroke="#2a3a48" stroke-width="1.500"/>
<g><rect x="1161" y="132" width="21" height="16" fill="#b39872"/><g fill="#e2cda8"><rect x="1161.500" y="132.500" width="6" height="3"/><rect x="1168.500" y="132.500" width="6" height="3"/><rect x="1175.500" y="132.500" width="6" height="3"/><rect x="1161.500" y="136.500" width="3" height="3"/><rect x="1165.500" y="136.500" width="6" height="3"/><rect x="1172.500" y="136.500" width="6" height="3"/><rect x="1179.500" y="136.500" width="2" height="3"/><rect x="1161.500" y="140.500" width="6" height="3"/><rect x="1168.500" y="140.500" width="6" height="3"/><rect x="1175.500" y="140.500" width="6" height="3"/><rect x="1161.500" y="144.500" width="3" height="3"/><rect x="1165.500" y="144.500" width="6" height="3"/><rect x="1172.500" y="144.500" width="6" height="3"/><rect x="1179.500" y="144.500" width="2" height="3"/></g></g>
<use href="#dd" x="1192.500" y="140"/>
<path d="M1201.500 87v55" stroke="#9aa0aa" stroke-width="1"/><path d="M1202.500 87v55" stroke="#eef0f3" stroke-width="1"/>
<!-- blocks -->
<path d="M1216.500 105.500l15-11.500h26l-12.500 11.500z" fill="#cfdaaa" stroke="#7f8c60" stroke-width=".6"/><path d="M1216.500 105.500h28.500v5.500h-28.500z" fill="#8f9c70"/><path d="M1245 105.500l12.500-11.500v3.500l-12.500 13.500z" fill="#a3ae80"/>
<path d="M1216.500 85l15-12v21l-15 11z" fill="#6a80c0"/><path d="M1216.500 85l3.500-2.800v20.300l-3.500 2.500z" fill="#2f4390"/><path d="M1224 83l5-4v14.500l-5 3.500z" fill="#9fb0e0" opacity=".7"/><path d="M1216.500 85l15-12v21" fill="none" stroke="#26367a" stroke-width=".8"/>
<path d="M1241.500 85.500c0-2.500 6-2.500 6 0v19h-6z" fill="#c83a58" stroke="#8a1a30" stroke-width=".6"/><path d="M1245.500 84.500v20" stroke="#e87a92" stroke-width="1.200"/>
<!-- col a -->
<path d="M1271 71l18 18" stroke="#1f4560" stroke-width="3"/><path d="M1276 76l8 8" stroke="#d32222" stroke-width="2"/><path d="M1284 84l5 5" stroke="#f0d020" stroke-width="2.500"/><path d="M1280 74.500h11M1285.500 69v11" stroke="#2f3f9c" stroke-width="3"/>
<path d="M1270 103l18 17M1276 100.500l16 15.500M1282 99l10 10" stroke="#1f4560" stroke-width="2.800"/><path d="M1268 116.500h11M1273.500 111v11" stroke="#2f3f9c" stroke-width="3"/>
<path d="M1271 143.500h20" stroke="#1f4560" stroke-width="1.600"/><path d="M1272 136h10l-5 6z" fill="#a83030"/><path d="M1272 151h10l-5-6z" fill="#1f6a5a"/><circle cx="1271" cy="143.500" r="2" fill="#cfe08a" stroke="#5a7a3a" stroke-width=".6"/><path d="M1281 133.500h11M1286.500 128v11" stroke="#2f3f9c" stroke-width="3"/>
<!-- col b highlighted -->
<rect x="1295" y="65" width="50" height="31" fill="none" stroke="#f9c42a" stroke-width="2"/>
<g stroke="#1f3f6a" stroke-width=".9" fill="#e6eef6"><path d="M1303 74l4-3h11v14l-4 3h-11z"/><path d="M1303 74h11v14M1314 74l4-3M1306.700 74v14M1310.300 74v14M1303 78.700h11M1303 83.300h11M1307 71l-0 0M1310.700 71l-3.500 3M1314.300 71l-3.500 3" fill="none"/></g>
<path d="M1309 86c0 6 4 7 8 6.500" fill="none" stroke="#3a3a9a" stroke-width="1.800"/><path d="M1320 92.500l-4.500-3v6z" fill="#3a3a9a"/>
<path d="M1323.500 73v19" stroke="#1f4560" stroke-width="2"/><circle cx="1323.500" cy="72.500" r="1.800" fill="#9fd06a" stroke="#3f6a3a" stroke-width=".6"/><circle cx="1323.500" cy="92.500" r="1.800" fill="#9fd06a" stroke="#3f6a3a" stroke-width=".6"/>
<use href="#dd" x="1335.500" y="80"/>
<g opacity=".92"><path d="M1305 109l5.500-6h13l-5.500 6z" fill="#ece4c4" stroke="#f7941d" stroke-width="2.200"/><path d="M1314.500 105.500l1-1" stroke="#444" stroke-width="1.500"/><path d="M1314.500 111v10" stroke="#7a6c4c" stroke-width="3"/></g>
<use href="#dd" x="1335.500" y="110" opacity=".6"/>
<g opacity=".95"><rect x="1302" y="134" width="16" height="15" fill="#b39872"/><g fill="#e2cda8"><rect x="1302.500" y="134.500" width="5" height="3"/><rect x="1308.500" y="134.500" width="5" height="3"/><rect x="1314.500" y="134.500" width="3" height="3"/><rect x="1302.500" y="142.500" width="5" height="3"/><rect x="1308.500" y="142.500" width="5" height="3"/><rect x="1314.500" y="142.500" width="3" height="3"/><rect x="1302.500" y="146.500" width="3" height="2"/><rect x="1306.500" y="146.500" width="5" height="2"/><rect x="1312.500" y="146.500" width="5" height="2"/></g><path d="M1301 139.500h18" stroke="#e23a1a" stroke-width="1.800"/><path d="M1323 131v6M1320 134l3 3.500l3-3.500M1319.500 139.500h7" fill="none" stroke="#6a6040" stroke-width="1"/></g>
<!-- ===== group 5 ===== -->
<path d="M1367 81l13-8.500v5.500c15-2 24 5 24 22h-6.500c0-11-6-16-17.500-15.500v5.500z" fill="#6a9f62" stroke="#4a7a44" stroke-width=".6"/>
<path d="M1369.500 106.500l3.500-9.500l21-19l5 5.500l-21 18.500z" fill="#f2a21a" stroke="#b8760a" stroke-width=".6"/><path d="M1375 96l20-18" stroke="#ffd86a" stroke-width="1.500"/><path d="M1394 78l3-2.700l5 5.500l-3 2.700z" fill="#e0573a"/><path d="M1369.500 106.500l3.500-9.500l5.500 5z" fill="#f0d8b0"/><path d="M1369.500 106.500l1.300-3.400l2 1.800z" fill="#333"/>
<text x="1380.500" y="113.500" font-family="Liberation Sans, sans-serif" font-size="28" fill="#55556e" stroke="#55556e" stroke-width=".5" textLength="29" lengthAdjust="spacingAndGlyphs">№</text>
<path d="M1451.500 73v24" stroke="#2f3f9c" stroke-width="5.500"/><path d="M1451.500 104l-6.500-10h13z" fill="#2f3f9c"/><circle cx="1451.500" cy="108.500" r="4.800" fill="#a9c97a" stroke="#6f8a4c"/>
<use href="#dd" x="1450.500" y="139"/>
<!-- col1 -->
<path d="M1491.500 76.500c0-3 6-3 6 0c3 0 4 1 4 3v11h-14v-11c0-2 1-3 4-3z" fill="url(#gcyl)" stroke="#55555d" stroke-width=".8"/><rect x="1489.500" y="68.500" width="10.500" height="3" rx=".8" fill="#e4e4ea" stroke="#6a6a72" stroke-width=".7"/><path d="M1494.700 71.500v3" stroke="#6a6a72" stroke-width="2.400"/>
<use href="#dd" x="1516.500" y="80"/>
<g stroke="#2f3f9c" stroke-width="1.500"><path d="M1487 102v11M1492 101v11M1497 100v11M1502 99v11"/></g><g fill="#2f3f9c"><path d="M1487 116l-2-4h4zM1492 115l-2-4h4zM1497 114l-2-4h4zM1502 113l-2-4h4z"/></g><path d="M1484 119.500l21-4.500" stroke="#1f4560" stroke-width="1.200"/>
<use href="#dd" x="1516.500" y="110"/>
<g opacity=".7"><path d="M1486 130l14 20M1502 130l-14 20" stroke="#8a8a7a" stroke-width="1.400"/><ellipse cx="1488" cy="148" rx="2.500" ry="4" transform="rotate(30 1488 148)" fill="none" stroke="#4a9a8a" stroke-width="1.300"/><ellipse cx="1501" cy="148" rx="2.500" ry="4" transform="rotate(-30 1501 148)" fill="none" stroke="#4a9a8a" stroke-width="1.300"/><path d="M1484 136l16-6l-2 5l6 0l-16 6l2-4z" fill="#7a7a72"/></g>
<use href="#dd" x="1516.500" y="140"/>
<!-- col2 -->
<path d="M1526.500 69.500h10l4 4v13h-14z" fill="#fff" stroke="#3b3b8c"/><path d="M1535.500 75.500h10l4 4v13h-14z" fill="#fff" stroke="#3b3b8c"/><path d="M1531.500 72v8M1542.500 78v9" stroke="#2f3f9c" stroke-width="2.600"/><path d="M1531.500 85l-3.500-5h7zM1542.500 91.500l-3.500-5h7z" fill="#2f3f9c"/>
<path d="M1529 104l6-5v3c6-1 9 1 10 4l-4 1c-1-2-3-2-6-2v3z" fill="#6fa35a" stroke="#4a7a3c" stroke-width=".5"/><path d="M1531 115l2-4l9-8l2.500 2.500l-9 8z" fill="#f2a21a"/><path d="M1542 103l1.500-1.500l2.500 2.500l-1.500 1.500z" fill="#e0573a"/>
<g stroke="#1877ff" stroke-width=".9" fill="#b9d6ff"><path d="M1542 106l-7 7l7 8l7-8z"/><path d="M1535 113h14M1542 106v15M1542 106l-3.500 7l3.500 8M1542 106l3.500 7l-3.500 8" fill="none"/></g>
<path d="M1528 130h7v4h-4v3h4v4h-4v3h4v4h-7z" fill="#f0a060" stroke="#c8601a" stroke-width=".8"/><path d="M1535 131h5l3 3v14h-8z" fill="#e8d8b8" stroke="#c8a070" stroke-width=".7"/>
<g stroke="#7aa0c8" stroke-width=".8" fill="#cfe0f2" opacity=".85"><path d="M1542 137l-7 6l7 8l7-8z"/><path d="M1535 143h14M1542 137v14" fill="none"/></g>
<!-- ===== group 6 ===== -->
<path d="M1576 97C1576 90 1584 83.500 1594 86C1602 88 1608 84.500 1614 86.500C1622 89 1622 96 1616 100C1610 104 1600 103 1594 102C1586 101 1577 104 1576 97z" fill="#a4b6b8" opacity=".85"/>
<path d="M1591 88l-7.500-13" stroke="#2f2f9c" stroke-width="1.400"/><path d="M1581 71l.5 7l5-3z" fill="#2f2f9c"/><path d="M1591 88l17-10" stroke="#1a8a4a" stroke-width="1.400"/><path d="M1613 75.300l-7 .7l3 5z" fill="#1a8a4a"/>
<path d="M1597.500 97v14" stroke="#d32222" stroke-width="2.500"/><circle cx="1597.500" cy="95" r="3" fill="#d32222"/><path d="M1597.500 115l-4.500-6h9z" fill="#d32222"/>
<text x="1602" y="111" font-family="Liberation Serif, serif" font-weight="bold" font-size="25" fill="#111">G</text>
<!-- col1 -->
<g opacity=".7"><rect x="1629" y="70" width="24" height="4" fill="#d07090"/><rect x="1633" y="70" width="4" height="4" fill="#c0b050"/><rect x="1637" y="70" width="4" height="4" fill="#70b070"/><rect x="1641" y="70" width="4" height="4" fill="#70a0c0"/><rect x="1645" y="70" width="4" height="4" fill="#9080c0"/><path d="M1630 77h8" stroke="#777" stroke-dasharray="1.500 1.500"/><path d="M1643 76l9 7l-4 .5l2.500 6l-2 1l-2.500-6l-3 3z" fill="#8a8a92"/></g>
<use href="#dd" x="1662.500" y="80" opacity=".6"/>
<rect x="1626.500" y="95.500" width="33" height="29" rx="2" fill="url(#gorbtn)" stroke="#b8863a"/>
<g><rect x="1630" y="99" width="25" height="4" fill="#222"/><rect x="1631" y="100" width="4" height="2" fill="#e02020"/><rect x="1635" y="100" width="4" height="2" fill="#e0a020"/><rect x="1639" y="100" width="4" height="2" fill="#e0e020"/><rect x="1643" y="100" width="4" height="2" fill="#20a040"/><rect x="1647" y="100" width="4" height="2" fill="#2060d0"/><rect x="1651" y="100" width="3" height="2" fill="#8020c0"/></g>
<path d="M1637 112c1-5 8-6 11-2.500" fill="none" stroke="#1f4a6a" stroke-width="1.800"/><path d="M1650 106v5.500h-5.500z" fill="#1f4a6a"/><path d="M1649 115c-1 5-8 6-11 2.500" fill="none" stroke="#1f4a6a" stroke-width="1.800"/><path d="M1636 121.500v-5.500h5.500z" fill="#1f4a6a"/>
<g><rect x="1630" y="129" width="25" height="4" fill="#222"/><rect x="1631" y="130" width="4" height="2" fill="#e02020"/><rect x="1635" y="130" width="4" height="2" fill="#e0a020"/><rect x="1639" y="130" width="4" height="2" fill="#e0e020"/><rect x="1643" y="130" width="4" height="2" fill="#20a040"/><rect x="1647" y="130" width="4" height="2" fill="#2060d0"/><rect x="1651" y="130" width="3" height="2" fill="#8020c0"/></g>
<circle cx="1643" cy="143.500" r="6.500" fill="#c8d4e2" stroke="#8a98aa" stroke-width=".6"/><path d="M1638 142c1-4 7-5 10-2" fill="none" stroke="#2a4a7a" stroke-width="1.800"/><path d="M1649.500 137v5h-5z" fill="#2a4a7a"/><path d="M1648 145.500c-1 4-7 5-10 2" fill="none" stroke="#2a4a7a" stroke-width="1.800"/><path d="M1636.500 150.500v-5h5z" fill="#2a4a7a"/>
<!-- col2 -->
<g opacity=".75"><text x="1672" y="86" font-family="Liberation Sans, sans-serif" font-size="14" fill="#7a96b0">1.2)</text><path d="M1673 88c6 3 14 3 20-1" fill="none" stroke="#7a96b0" stroke-width="1"/></g>
<use href="#dd" x="1705.500" y="80" opacity=".6"/>
<path d="M1674 101c3 10 10 12 20 13v6h-20z" fill="none" stroke="#c83232" stroke-width="1.400"/><path d="M1677 108v12M1680 110.500v9.500M1683 112v8M1686 113v7M1689 113.500v6.500M1692 114v6" stroke="#c83232" stroke-width="1.100"/><path d="M1673.500 120.500h21" stroke="#1f4560" stroke-width="1.400"/>
<use href="#dd" x="1705.500" y="110"/>
<g stroke="#2a2a6a" stroke-width=".9"><rect x="1675.500" y="130.500" width="10" height="10" fill="#eb9a48"/><rect x="1685.500" y="130.500" width="10" height="10" fill="#fff27a"/><rect x="1685.500" y="140.500" width="10" height="10" fill="#eb9a48"/></g><text x="1672.500" y="152" font-family="Liberation Serif, serif" font-weight="bold" font-size="14" fill="#2a2a5a">C</text>
<use href="#dd" x="1705.500" y="140"/>
<!-- col3 -->
<text x="1715" y="88" font-family="Liberation Serif, serif" font-size="23" fill="#2a2c58">Σ</text><path d="M1734.500 70v14" stroke="#2f3f9c" stroke-width="3"/><path d="M1734.500 91l-5-8h10z" fill="#2f3f9c"/>
<g stroke="#2a2a6a" stroke-width=".9"><rect x="1716.500" y="100.500" width="10" height="10" fill="#eb9a48"/><rect x="1726.500" y="100.500" width="8" height="10" fill="#fff27a"/><rect x="1716.500" y="110.500" width="10" height="10" fill="#b03020"/><rect x="1726.500" y="110.500" width="8" height="10" fill="#eb9a48"/></g><path d="M1734.500 100v14" stroke="#2f3f9c" stroke-width="3"/><path d="M1734.500 121.500l-5-8h10z" fill="#2f3f9c"/>
<g stroke="#2a2a6a" stroke-width=".9"><rect x="1717.500" y="130.500" width="10" height="10" fill="#eb9a48"/><rect x="1727.500" y="130.500" width="10" height="10" fill="#fff27a"/><rect x="1727.500" y="140.500" width="10" height="10" fill="#eb9a48"/></g><path d="M1720 135.500h3.500v12l-1.700 4l-1.800-4z" fill="#1f3f5c"/>
<use href="#dd" x="1748.500" y="140"/>
</svg>
<div id="view"><div class="abs" style="left:3px;top:2px;font-family:'Liberation Serif',serif;font-size:28px;line-height:30px;color:#000">1</div></div>
<svg class="ico" style="left:0;top:186px" width="1906" height="810" viewBox="0 186 1906 810" shape-rendering="crispEdges">
<g stroke="#000" stroke-width="2.8" stroke-linejoin="round">
<polygon points="100.5,444.0 122.5,470.0 122.5,751.0 100.5,725.0" fill="#0ff"/>
<polygon points="56.5,467.0 111.0,458.4 111.0,738.5 56.5,747.0" fill="#ff0"/>
<polygon points="111.5,457.5 122.5,470.0 122.5,751.0 111.5,739.0" fill="#0ff"/>
<polygon points="112.8,529.9 119.5,535.5 119.5,571.0 112.8,565.8" fill="#000080" stroke-width="1.2"/>
<polygon points="112.8,565.8 119.5,571.0 119.5,719.0 112.8,711.0" fill="#004000" stroke-width="1.2"/>
<polygon points="120.0,533.0 124.0,533.0 124.0,724.0 120.0,720.0" fill="#000" stroke-width="1"/>
<polygon points="68.0,555.3 108.5,546.0 120.5,557.8 68.0,568.0" fill="#ff80ff"/>
<polygon points="68.0,720.5 111.0,712.3 121.5,723.5 68.0,733.3" fill="#ff80ff"/>
<polygon points="45.5,455.5 67.5,481.0 67.5,761.0 45.5,735.0" fill="#0ff"/>
<path d="M56.500 467V747M45.500 545L56.500 556.500L67.500 568M45.500 709L56.500 720.500L67.500 732" fill="none" stroke-width="2"/>
<path d="M57.800 470V745" fill="none" stroke="#000" stroke-width="1" stroke-dasharray="1 8"/>
<polygon points="1259.5,227.0 1281.5,252.5 1281.5,533.0 1259.5,507.0" fill="#0ff"/>
<polygon points="1214.5,249.0 1270.0,240.3 1270.0,519.0 1214.5,529.0" fill="#ff0"/>
<polygon points="1270.2,239.5 1281.5,252.5 1281.5,533.0 1270.2,520.0" fill="#0ff"/>
<polygon points="1227.8,337.0 1270.5,328.7 1280.0,338.6 1227.8,347.0" fill="#ff80ff"/>
<polygon points="1227.8,503.0 1270.5,495.0 1280.0,505.5 1227.8,514.3" fill="#ff80ff"/>
<polygon points="1203.5,237.5 1226.5,263.5 1226.5,543.0 1203.5,517.0" fill="#0ff"/>
<path d="M1214.600 250V529.500" fill="none" stroke-width="2.400"/>
<polygon points="1203.0,306.0 1214.0,317.0 1214.0,324.0 1203.0,331.0" fill="#000" stroke-width="1"/>
<polygon points="1207.2,311.6 1212.6,317.3 1207.2,321.5" fill="#000080" stroke="none"/>
<polygon points="1215.9,322.1 1221.8,327.8 1221.8,362.0 1215.9,356.0" fill="#000080" stroke="none"/>
<polygon points="1216.5,356.0 1222.0,362.0 1222.0,508.0 1216.5,504.0" fill="#004000" stroke="none"/>
<path d="M1217 355l5 5" stroke-width="1.500"/>
<polygon points="1222.0,327.0 1227.5,330.0 1227.5,543.0 1222.0,508.0" fill="#000" stroke-width="1"/>
<path d="M1205 307.200L1225 327.600" fill="none" stroke-width="2.800"/>
<polygon points="124.0,660.0 168.0,652.8 124.0,697.0" fill="#ff80ff"/>
<polygon points="168.0,652.8 194.0,648.0 124.0,718.5 124.0,697.0" fill="#0080ff"/>
<polygon points="1157.0,466.3 1214.0,457.0 1214.0,501.5" fill="#ff80ff"/>
<polygon points="1152.0,467.2 1157.5,466.3 1222.0,506.5 1222.0,510.5" fill="#0080ff" stroke-width="2"/>
<path d="M1215.300 452V508" fill="none" stroke-width="2.800"/>
<polygon points="124.0,530.7 1201.7,327.4 1219.0,346.0 1219.0,348.1 124.0,555.1" fill="#80ff00"/>
<path d="M124 542.4L1212.500 337.4" fill="none"/>
<polygon points="124.0,555.1 1214.0,349.0 1214.0,442.1 124.0,647.0" fill="#00f"/>
<polygon points="124.0,647.0 1213.0,442.3 1224.0,452.3 124.0,659.1" fill="#80ff00"/>
<polygon points="185.0,544.5 194.5,541.6 194.5,645.8 185.0,635.6" fill="#008000"/>
<path d="M194.7 541.6V645.8" stroke-width="3" fill="none"/>
<polygon points="1141.0,363.8 1151.5,360.7 1151.5,465.9 1141.0,455.9" fill="#008000"/>
<path d="M1151.7 360.7V465.9" stroke-width="3" fill="none"/>
<polygon points="1197.9,332.8 1212.9,321.4 1212.9,337.1 1197.9,338.8" fill="#800000" stroke-width="2"/>
<polygon points="124.0,528.0 131.0,527.0 131.0,542.0 124.0,543.0" fill="#000" stroke="none"/>
<polygon points="124.5,533.0 129.0,533.0 129.0,541.0 124.5,541.0" fill="#800000" stroke-width="1"/>
<path d="M130.300 530V541.500" fill="none" stroke-width="2.600"/>
</g>
<g stroke="#f00" fill="none" stroke-linecap="butt">
<path d="M174.8 520.9L195.4 542.4" stroke-width="3.400"/>
<path d="M323 492.9L343.4 514.4" stroke-width="3.400"/>
<path d="M543.6 451.3L563.6 472.8" stroke-width="3.400"/>
<path d="M764 409.7L784.2 431.1" stroke-width="3.400"/>
<path d="M984 368.1L1004.4 389.4" stroke-width="3.400"/>
<path d="M1131 340.4L1152 361.5" stroke-width="3.400"/>
<path d="M185 545.0V635.6L195.5 646.2" stroke-width="3"/>
<path d="M333 517.1V607.8L343.5 618.4" stroke-width="3"/>
<path d="M553 475.5V566.4L563.5 577.0" stroke-width="3"/>
<path d="M773.6 433.8V524.9L784.1 535.5" stroke-width="3"/>
<path d="M994.4 392.0V483.4L1004.9 494.0" stroke-width="3"/>
<path d="M1141 364.3V455.9L1151.5 466.5" stroke-width="3"/>
<path d="M108.500 543.300L121 556.500" stroke-width="3.600"/>
<path d="M111 560V649.500L120.500 661" stroke-width="3.600"/>
<path d="M1212.900 334.800L1224.800 347.800" stroke-width="3.600"/>
<path d="M1214.500 350V443L1224.500 454.500" stroke-width="4.400"/>
</g>
<g stroke="#0000c0" stroke-width="1" fill="none" stroke-dasharray="1 3" opacity=".8">
<path d="M333.5 518.6V605.8"/>
<path d="M553.5 477.0V564.4"/>
<path d="M774.1 435.3V522.9"/>
<path d="M994.9 393.5V481.4"/>
</g><g stroke="#300" stroke-width="1" fill="none" stroke-dasharray="1 6">
<path d="M185.5 548.4V633.5"/>
<path d="M1141.5 367.7V453.8"/>
</g>
<g stroke="#f00" fill="none">
<path d="M342 919.800L1447.600 711" stroke-width="1.700"/>
<path d="M378.7 858.5V965.6" stroke-width="3"/>
<path d="M373.0 853.0L384.7 864.0M373.0 960.1L384.7 971.1" stroke-width="2"/>
<path d="M489.6 837.7V944.8" stroke-width="3"/>
<path d="M483.90000000000003 832.2L495.6 843.2M483.90000000000003 939.3L495.6 950.3" stroke-width="2"/>
<path d="M672 804.5V910.5" stroke-width="3"/>
<path d="M666.3 799.0L678 810.0M666.3 905.0L678 916.0" stroke-width="2"/>
<path d="M893.2 763V869.5" stroke-width="3"/>
<path d="M887.5 757.5L899.2 768.5M887.5 864.0L899.2 875.0" stroke-width="2"/>
<path d="M1114.4 721.5V826.5" stroke-width="3"/>
<path d="M1108.7 716.0L1120.4 727.0M1108.7 821.0L1120.4 832.0" stroke-width="2"/>
<path d="M1298 686V791.5" stroke-width="3"/>
<path d="M1292.3 680.5L1304 691.5M1292.3 786.0L1304 797.0" stroke-width="2"/>
<path d="M1409 665V771.5" stroke-width="3"/>
<path d="M1403.3 659.5L1415 670.5M1403.3 766.0L1415 777.0" stroke-width="2"/>
</g>
</svg>
<svg class="ico" style="left:1280px;top:60px" width="626" height="140" viewBox="1280 60 626 140"><polygon points="1295,97 1346,97 1893.500,194.500 1314.500,194.500" fill="#f7c22e" fill-opacity=".37"/><path d="M1346 97L1893.500 194.500M1295 97L1314.500 194.500" stroke="#f9cf5a" stroke-opacity=".8" stroke-width="1.500" fill="none"/></svg>
<div id="dlg">
<div class="abs" style="left:0;top:0;width:576px;height:31px;background:#fff"></div>
<svg class="ico" style="left:7px;top:8px" width="16" height="14" viewBox="0 0 16 14"><defs><linearGradient id="gti" x1="0" y1="0" x2="0" y2="1"><stop offset="0" stop-color="#3a7a9a"/><stop offset="1" stop-color="#4a9a5a"/></linearGradient></defs><rect x=".5" y=".5" width="14" height="12.500" fill="#f6f6f6" stroke="#a8aab0"/><rect x="2" y="3" width="5" height="8" fill="url(#gti)"/><rect x="8" y="3" width="2.500" height="8" fill="#dcdcdc"/><rect x="11.500" y="3" width="2" height="3" fill="#6a9ac0"/><rect x="11.500" y="6" width="2" height="2" fill="#8ac08a"/></svg>
<div class="t" style="left:28.5px;top:10px;font-size:12px;color:#7a7a7a;letter-spacing:-0.1px">Стержневые аналоги</div>
<svg class="ico" style="left:556px;top:9px" width="12" height="12" viewBox="0 0 12 12"><path d="M.5 .5l11 11M11.500 .5l-11 11" stroke="#555" stroke-width="1"/></svg>
<div class="abs" style="left:1px;top:54px;width:573px;height:1px;background:#d9d9d9"></div>
<div class="abs" style="left:46px;top:35px;width:39px;height:19px;border:1px solid #d9d9d9;border-bottom:none;box-sizing:border-box;background:#f0f0f0"></div>
<div class="abs" style="left:1px;top:33px;width:46px;height:22px;border:1px solid #d9d9d9;border-bottom:none;box-sizing:border-box;background:#fff"></div>
<svg class="ico" style="left:8px;top:34px" width="18" height="18" viewBox="1324 230 18 18"><path d="M1325 234l3-3h8v10l-2 2.500h-9z" fill="#1f3a5c"/><g fill="#fff"><rect x="1326" y="235" width="2" height="1.800"/><rect x="1326" y="238" width="2" height="1.800"/><rect x="1326" y="241" width="2" height="1.500" fill="#bbb"/><rect x="1329" y="235" width="2" height="1.800"/><rect x="1329" y="238" width="2" height="1.800"/><rect x="1331" y="232.500" width="2" height="1.500"/><rect x="1333" y="235.500" width="1.800" height="1.800"/><rect x="1333" y="238.500" width="1.800" height="1.800"/></g><path d="M1330.500 238c0 5 2 6 5 5.500" fill="none" stroke="#3a2a7a" stroke-width="1.600"/><path d="M1337.500 243.500l-3.500-2.800v5.400z" fill="#3a2a7a"/><path d="M1339.600 234.500v11" stroke="#1f4560" stroke-width="1.100"/><circle cx="1339.600" cy="234.300" r="1.300" fill="#e0e88a" stroke="#7a9a3a" stroke-width=".6"/><circle cx="1339.600" cy="245.500" r="1.300" fill="#e0e88a" stroke="#7a9a3a" stroke-width=".6"/></svg>
<svg class="ico" style="left:50px;top:35px" width="18" height="18" viewBox="1366 231 18 18"><rect x="1367" y="233" width="9" height="7" fill="#f0801a"/><g fill="#fff"><rect x="1368" y="234.300" width="3" height="1.200"/><rect x="1372" y="234.300" width="3" height="1.200"/><rect x="1368" y="236.600" width="3" height="1.200"/><rect x="1372" y="236.600" width="3" height="1.200"/></g><rect x="1367" y="240" width="6.500" height="6" fill="#1f3a5c"/><g fill="#fff"><rect x="1368" y="241.200" width="4" height="1.200"/><rect x="1368" y="243.600" width="4" height="1.200"/></g><path d="M1373.500 240.500c.5 3 2 4.500 4 5" fill="none" stroke="#3a2a7a" stroke-width="1.600"/><path d="M1379.500 246.500l-4-1l2.500-3.500z" fill="#3a2a7a"/><path d="M1381 236v10" stroke="#1f4560" stroke-width="1"/><circle cx="1381" cy="236" r="1.200" fill="#e0e88a" stroke="#7a9a3a" stroke-width=".5"/><circle cx="1381" cy="246.500" r="1.200" fill="#e0e88a" stroke="#7a9a3a" stroke-width=".5"/></svg>
<div class="gb" style="left:5px;top:65px;width:569px;height:159px"></div>
<div class="gbl" style="left:11.5px;top:58.5px">Стержневой аналог</div>
<div class="t" style="left:12.5px;top:77px">A :&nbsp; Номер целевого стержня</div>
<div class="inp" style="left:248px;top:73.5px;width:195px;height:20px">1</div>
<div class="btn" style="left:449px;top:74px;width:31px;height:18px">&lt;&lt;</div>
<div class="btn" style="left:485px;top:74px;width:31px;height:18px">&gt;&gt;</div>
<div class="gb" style="left:11px;top:99px;width:513px;height:54px"></div>
<div class="gbl" style="left:17.5px;top:92.5px">1 :&nbsp; Начальное поперечное сечение</div>
<div class="t" style="left:19px;top:110.5px">N :&nbsp; Номера узлов</div>
<div class="inp" style="left:151px;top:107.5px;width:293px;height:19px">1 148 459 1082 1706 3881 5125 5748 6060 6371 9172 10416</div>
<div class="btn" style="left:449px;top:108px;width:31px;height:18px">&lt;&lt;</div>
<div class="btn" style="left:485px;top:108px;width:31px;height:18px">&gt;&gt;</div>
<div class="t" style="left:19px;top:131.5px">E :&nbsp; Номера элементов</div>
<div class="inp" style="left:151px;top:128.5px;width:293px;height:19px">16115-16127 16161-16220 16231-16265</div>
<div class="btn" style="left:449px;top:129px;width:31px;height:18px">&lt;&lt;</div>
<div class="btn" style="left:485px;top:129px;width:31px;height:18px">&gt;&gt;</div>
<div class="gb" style="left:11px;top:164px;width:513px;height:54px"></div>
<div class="gbl" style="left:17.5px;top:157.5px">2 :&nbsp; Конечное поперечное сечение</div>
<div class="t" style="left:19px;top:175.5px">N :&nbsp; Номера узлов</div>
<div class="inp" style="left:151px;top:172.5px;width:293px;height:19px">499 1122 2056 3609 3921 4853 5165 7033 7344 7656 7968 8279</div>
<div class="btn" style="left:449px;top:173px;width:31px;height:18px">&lt;&lt;</div>
<div class="btn" style="left:485px;top:173px;width:31px;height:18px">&gt;&gt;</div>
<div class="t" style="left:19px;top:196.5px">E :&nbsp; Номера элементов</div>
<div class="inp" style="left:151px;top:193.5px;width:293px;height:19px">22365-22472</div>
<div class="btn" style="left:449px;top:194px;width:31px;height:18px">&lt;&lt;</div>
<div class="btn" style="left:485px;top:194px;width:31px;height:18px">&gt;&gt;</div>
<div class="btn" style="left:531px;top:72px;width:31px;height:21px;"><svg width="29" height="19" viewBox="0 0 29 19" style="display:block"><path d="M8 9.500h13M14.500 3v13" stroke="#3a2f8c" stroke-width="3.600"/></svg></div>
<div class="btn" style="left:531px;top:98px;width:31px;height:21px;"><svg width="29" height="19" viewBox="0 0 29 19" style="display:block"><path d="M9 6h11" stroke="#c02020" stroke-width="1.600"/><path d="M7 6l4-2.500v5z" fill="#c02020"/><path d="M9 13h11" stroke="#1a7a3a" stroke-width="1.600"/><path d="M22 13l-4-2.500v5z" fill="#1a7a3a"/></svg></div>
<div class="btn" style="left:531px;top:124px;width:31px;height:21px;"><svg width="29" height="19" viewBox="0 0 29 19" style="display:block"><path d="M10.500 2l7 11M18.500 2l-7 11" stroke="#6f7d8c" stroke-width="1.100"/><ellipse cx="10.500" cy="14.500" rx="1.800" ry="2.600" transform="rotate(25 10.500 14.500)" fill="none" stroke="#2e86d6" stroke-width="1.300"/><ellipse cx="18.500" cy="14.500" rx="1.800" ry="2.600" transform="rotate(-25 18.500 14.500)" fill="none" stroke="#2e86d6" stroke-width="1.300"/></svg></div>
<div class="gb" style="left:5px;top:233px;width:570px;height:181px"></div>
<div class="gbl" style="left:11.5px;top:226.5px">Список стержневых аналогов</div>
<div class="abs" style="left:11px;top:244px;width:510px;height:163px;background:#fff;border:1px solid #828790;box-sizing:border-box;overflow:hidden">
<div class="t" style="left:6.7px;top:6.500px">ID</div>
<div class="t" style="left:87.7px;top:6.500px">A</div>
<div class="t" style="left:168.7px;top:6.500px">1:N</div>
<div class="t" style="left:249.7px;top:6.500px">1:E</div>
<div class="t" style="left:330.7px;top:6.500px">2:N</div>
<div class="t" style="left:411.7px;top:6.500px">2:E</div>
<div class="abs" style="left:81.7px;top:1px;width:1px;height:23px;background:#e5e5e5"></div>
<div class="abs" style="left:81.7px;top:24px;width:1px;height:140px;background:#f0f0f0"></div>
<div class="abs" style="left:162.7px;top:1px;width:1px;height:23px;background:#e5e5e5"></div>
<div class="abs" style="left:162.7px;top:24px;width:1px;height:140px;background:#f0f0f0"></div>
<div class="abs" style="left:243.7px;top:1px;width:1px;height:23px;background:#e5e5e5"></div>
<div class="abs" style="left:243.7px;top:24px;width:1px;height:140px;background:#f0f0f0"></div>
<div class="abs" style="left:324.7px;top:1px;width:1px;height:23px;background:#e5e5e5"></div>
<div class="abs" style="left:324.7px;top:24px;width:1px;height:140px;background:#f0f0f0"></div>
<div class="abs" style="left:405.7px;top:1px;width:1px;height:23px;background:#e5e5e5"></div>
<div class="abs" style="left:405.7px;top:24px;width:1px;height:140px;background:#f0f0f0"></div>
<div class="abs" style="left:486.7px;top:1px;width:1px;height:23px;background:#e5e5e5"></div>
<div class="abs" style="left:486.7px;top:24px;width:1px;height:140px;background:#f0f0f0"></div>
<div class="abs" style="left:5px;top:25px;width:482px;height:119px;background:#f0f0f0"></div>
<div class="abs" style="left:0;top:41.5px;width:508px;height:1px;background:#f4f4f4"></div>
<div class="t" style="left:6.7px;top:27.5px">1</div>
<div class="t" style="left:87.7px;top:27.5px">1</div>
<div class="t" style="left:168.7px;top:27.5px">1 148 459 1...</div>
<div class="t" style="left:249.7px;top:27.5px">16115-161...</div>
<div class="t" style="left:330.7px;top:27.5px">499 1122 2...</div>
<div class="t" style="left:411.7px;top:27.5px">22365-22472</div>
<div class="abs" style="left:0;top:58.5px;width:508px;height:1px;background:#f4f4f4"></div>
<div class="t" style="left:6.7px;top:44.5px">2</div>
<div class="t" style="left:87.7px;top:44.5px">2</div>
<div class="t" style="left:168.7px;top:44.5px">499 1122 2...</div>
<div class="t" style="left:249.7px;top:44.5px">23937-24044</div>
<div class="t" style="left:330.7px;top:44.5px">267 579 88...</div>
<div class="t" style="left:411.7px;top:44.5px">32469-32576</div>
<div class="abs" style="left:0;top:75.5px;width:508px;height:1px;background:#f4f4f4"></div>
<div class="t" style="left:6.7px;top:61.5px">3</div>
<div class="t" style="left:87.7px;top:61.5px">3</div>
<div class="t" style="left:168.7px;top:61.5px">267 579 88...</div>
<div class="t" style="left:249.7px;top:61.5px">32577-32684</div>
<div class="t" style="left:330.7px;top:61.5px">387 699 10...</div>
<div class="t" style="left:411.7px;top:61.5px">45429-45536</div>
<div class="abs" style="left:0;top:92.5px;width:508px;height:1px;background:#f4f4f4"></div>
<div class="t" style="left:6.7px;top:78.5px">4</div>
<div class="t" style="left:87.7px;top:78.5px">4</div>
<div class="t" style="left:168.7px;top:78.5px">387 699 10...</div>
<div class="t" style="left:249.7px;top:78.5px">45537-45644</div>
<div class="t" style="left:330.7px;top:78.5px">18682 1883...</div>
<div class="t" style="left:411.7px;top:78.5px">58389-58496</div>
<div class="abs" style="left:0;top:109.5px;width:508px;height:1px;background:#f4f4f4"></div>
<div class="t" style="left:6.7px;top:95.5px">5</div>
<div class="t" style="left:87.7px;top:95.5px">5</div>
<div class="t" style="left:168.7px;top:95.5px">18682 1883...</div>
<div class="t" style="left:249.7px;top:95.5px">58497-58604</div>
<div class="t" style="left:330.7px;top:95.5px">18955 1924...</div>
<div class="t" style="left:411.7px;top:95.5px">71349-71456</div>
<div class="abs" style="left:0;top:126.5px;width:508px;height:1px;background:#f4f4f4"></div>
<div class="t" style="left:6.7px;top:112.5px">6</div>
<div class="t" style="left:87.7px;top:112.5px">6</div>
<div class="t" style="left:168.7px;top:112.5px">18955 1924...</div>
<div class="t" style="left:249.7px;top:112.5px">71457-71564</div>
<div class="t" style="left:330.7px;top:112.5px">20181 2047...</div>
<div class="t" style="left:411.7px;top:112.5px">79989-80096</div>
<div class="abs" style="left:0;top:143.5px;width:508px;height:1px;background:#f4f4f4"></div>
<div class="t" style="left:6.7px;top:129.5px">7</div>
<div class="t" style="left:87.7px;top:129.5px">7</div>
<div class="t" style="left:168.7px;top:129.5px">20181 2047...</div>
<div class="t" style="left:249.7px;top:129.5px">81561-81668</div>
<div class="t" style="left:330.7px;top:129.5px">19074 2022...</div>
<div class="t" style="left:411.7px;top:129.5px">87768-877...</div>
</div>
<div class="btn" style="left:531px;top:245px;width:31px;height:21px;"><svg width="29" height="19" viewBox="0 0 29 19" style="display:block"><path d="M10.500 2l7 11M18.500 2l-7 11" stroke="#6f7d8c" stroke-width="1.100"/><ellipse cx="10.500" cy="14.500" rx="1.800" ry="2.600" transform="rotate(25 10.500 14.500)" fill="none" stroke="#2e86d6" stroke-width="1.300"/><ellipse cx="18.500" cy="14.500" rx="1.800" ry="2.600" transform="rotate(-25 18.500 14.500)" fill="none" stroke="#2e86d6" stroke-width="1.300"/></svg></div>
<div class="btn" style="left:531px;top:271px;width:31px;height:21px;"><svg width="29" height="19" viewBox="0 0 29 19" style="display:block"><rect x="9" y="9" width="11" height="7" fill="#e8b050" stroke="#a87818" stroke-width=".8"/><path d="M8 9l2-3h9l2 3z" fill="#d09838" stroke="#a87818" stroke-width=".6"/><circle cx="12" cy="5" r="1.800" fill="#8fc060"/><circle cx="16" cy="4" r="1.800" fill="#8fc060"/><circle cx="18.500" cy="6.500" r="1.500" fill="#8fc060"/><rect x="11" y="11" width="7" height="2" fill="#fff2c8"/></svg></div>
<div class="btn" style="left:531px;top:297px;width:31px;height:21px;background:#cce4f7;border-color:#0078d7;"><svg width="29" height="19" viewBox="0 0 29 19" style="display:block"><path d="M7 3.500h15l-6 7v6h-3v-6z" fill="#fff" stroke="#333" stroke-width="1"/><path d="M9.500 5h10l-5 5.500z" fill="#e02020"/></svg></div>
<div class="btn" style="left:531px;top:323px;width:31px;height:21px;"><svg width="29" height="19" viewBox="0 0 29 19" style="display:block"><path d="M7 2l7 7l-3.500 .3l2 4l-1.500 .8l-2-4l-2 2.400z" fill="#222"/><path d="M13 10h10l-4 4.500v3.500h-2v-3.500z" fill="#fff" stroke="#333" stroke-width="1"/></svg></div>
<div class="abs" style="left:11px;top:423px;width:13px;height:13px;background:#fff;border:1px solid #333;box-sizing:border-box"><svg width="11" height="11" viewBox="0 0 11 11" style="display:block"><path d="M1.500 5.500l3 3l5-6.500" fill="none" stroke="#222" stroke-width="1.100"/></svg></div>
<div class="t" style="left:26.5px;top:423px">Список для фрагмента</div>
<div class="abs" style="left:170px;top:423px;width:13px;height:13px;background:#fff;border:1px solid #333;box-sizing:border-box"><svg width="11" height="11" viewBox="0 0 11 11" style="display:block"><path d="M1.500 5.500l3 3l5-6.500" fill="none" stroke="#222" stroke-width="1.100"/></svg></div>
<div class="t" style="left:185.5px;top:423px">Отмечать вместе с исходными узлами и элементами</div>
<div class="btn" style="left:480px;top:418px;width:31px;height:21px"><svg width="29" height="19" viewBox="0 0 29 19" style="display:block"><circle cx="14.500" cy="7.500" r="4.500" fill="#c8ccd4" stroke="#555" stroke-width="1" stroke-dasharray="2 1"/><circle cx="14.500" cy="7.500" r="1.800" fill="#fff" stroke="#555" stroke-width=".7"/><path d="M9 9h7" stroke="#c02020" stroke-width="1.500"/><path d="M7 9l3.500-2.200v4.400z" fill="#c02020"/><path d="M12 15h8" stroke="#1a7a3a" stroke-width="1.500"/><path d="M22 15l-3.500-2.200v4.400z" fill="#1a7a3a"/></svg></div>
<div class="btn" style="left:516px;top:418px;width:31px;height:21px;font-family:'Liberation Serif',serif;font-weight:bold;font-size:15px;line-height:19px;color:#6a8a1a;text-shadow:0 0 1px #3a5a10">?</div>
<svg class="ico" style="left:563.5px;top:432px" width="11" height="11" viewBox="0 0 11 11"><g fill="#b0b0b0"><rect x="8" y="2" width="2" height="2"/><rect x="5" y="5" width="2" height="2"/><rect x="8" y="5" width="2" height="2"/><rect x="2" y="8" width="2" height="2"/><rect x="5" y="8" width="2" height="2"/><rect x="8" y="8" width="2" height="2"/></g></svg>
</div>
<div class="abs" style="left:1px;top:996px;width:1904px;height:2px;background:#9a9da3"></div>
<div id="btool"></div>
<div id="status"></div>
<div class="abs" style="left:1358px;top:998px;width:19px;height:47px;background:linear-gradient(#9ea3ad,#70757f);border-radius:0 4px 4px 0"></div>
<div class="abs" style="left:1830px;top:998px;width:17px;height:47px;background:linear-gradient(#9ea3ad,#70757f);border-radius:0 4px 4px 0"></div>
<div class="abs" style="left:1886px;top:998px;width:19px;height:47px;background:linear-gradient(#9ea3ad,#70757f);border-radius:0 4px 4px 0"></div>
<div class="abs" style="left:1377px;top:998px;width:2px;height:47px;background:rgba(255,255,255,.45)"></div>
<div class="abs" style="left:1848px;top:998px;width:2px;height:47px;background:rgba(255,255,255,.45)"></div>
<div class="abs" style="left:1431px;top:1000px;width:44px;height:43px;box-sizing:border-box;border:1px solid #e8b86a;background:linear-gradient(#fde3b4 0,#fbc978 45%,#f9b24a 55%,#fcd792 100%)"></div>
<div class="abs" style="left:1333px;top:1046px;width:2px;height:25px;background:#161616"></div><div class="abs" style="left:1334.5px;top:1047px;width:570px;height:23px;background:linear-gradient(#d6d9dd,#c0c4cb 35%,#b4b8c0);box-sizing:border-box"></div><div class="abs" style="left:1341px;top:1050px;width:70px;height:18px;background:linear-gradient(#e6ecee,#d4dcde);border:1px solid #c2c8cc;border-radius:2px;box-sizing:border-box"></div><div class="abs" style="left:1362.5px;top:1051px;width:1px;height:16px;background:#c8ced2"></div><div class="abs" style="left:1386.5px;top:1051px;width:1px;height:16px;background:#c8ced2"></div>
<div class="abs" style="left:1412px;top:1049px;width:54px;height:19px;background:#f2f2f2;border:1px solid #9a9ea6;box-sizing:border-box;font-size:12px;line-height:17px;padding-left:3px">1.</div>
<div class="abs" style="left:1498px;top:1049px;width:53px;height:19px;background:#f2f2f2;border:1px solid #9a9ea6;box-sizing:border-box;font-size:12px;line-height:17px;padding-left:3px">1.</div>
<div class="abs" style="left:1473px;top:1048px;width:23px;height:21px;background:linear-gradient(#f4f4f4,#d8dadd);border:1px solid #aab;box-sizing:border-box"></div>
<div class="abs" style="left:1469px;top:1049px;width:2px;height:20px;background:linear-gradient(90deg,#444,#444 50%,#eee 50%)"></div>
<div class="abs" style="left:1554px;top:1049px;width:2px;height:20px;background:linear-gradient(90deg,#444,#444 50%,#eee 50%)"></div>
<div class="abs" style="left:1689px;top:1049px;width:2px;height:20px;background:linear-gradient(90deg,#444,#444 50%,#eee 50%)"></div>
<div class="abs" style="left:1822px;top:1049px;width:2px;height:20px;background:linear-gradient(90deg,#444,#444 50%,#eee 50%)"></div>
<div class="abs" style="left:1559.500px;top:1052px;font-size:11.5px;line-height:14px;white-space:nowrap;letter-spacing:-0.3px;color:#111">Уз.: 218 / 104721</div>
<div class="abs" style="left:1693px;top:1052px;font-size:11.5px;line-height:14px;white-space:nowrap;letter-spacing:-0.3px;color:#111">Эл.: 1519 / 104030</div>
<div class="abs" style="left:1826px;top:1052px;font-size:11.5px;line-height:14px;white-space:nowrap;letter-spacing:-0.3px;color:#111">Загр.: 1 / 3</div>
<svg class="ico" style="left:0;top:996px" width="1906" height="75" viewBox="0 996 1906 75">
<defs>
<radialGradient id="glens" cx=".4" cy=".3" r=".8"><stop offset="0" stop-color="#ffffff"/><stop offset=".7" stop-color="#e4ecf6"/><stop offset="1" stop-color="#a8bcd8"/></radialGradient>
<g id="lens"><path d="M9.500 9.500l3.500 3.500" stroke="#eceef2" stroke-width="3" stroke-linecap="round"/><circle r="14" fill="url(#glens)" stroke="#7f9ccc" stroke-width="1.200"/><circle r="12.600" fill="none" stroke="#fff" stroke-width="1" opacity=".8"/></g>
<g id="dda"><path d="M-5 -2.500h10" stroke="#555" stroke-width="1.400"/><path d="M-4 -1h8l-4 4z" fill="#444"/></g>
<g id="ovf"><path d="M-5 -4h10" stroke="#f2f2f2" stroke-width="1.500"/><path d="M-4.500 0h9l-4.500 4.500z" fill="#f2f2f2"/><path d="M-2 1.500l2 2M2 1.500l-2 2" stroke="#555" stroke-width=".8"/></g>
<g id="grip"><path d="M0 0v30" stroke="#222" stroke-width="1.600" stroke-dasharray="1.500 1.500"/><path d="M1.500 .8v30" stroke="#f4f4f4" stroke-width="1.200" stroke-dasharray="1.500 1.500"/></g>
</defs>
<use href="#grip" x="6.500" y="1006"/><use href="#grip" x="1382.500" y="1006"/><use href="#grip" x="1853.500" y="1006"/>
<use href="#ovf" x="1368" y="1036"/><use href="#ovf" x="1839" y="1036"/><use href="#ovf" x="1896" y="1036"/>
<path d="M1891 1007l3 3l-3 3M1896 1007l3 3l-3 3" fill="none" stroke="#f2f2f2" stroke-width="1.600"/>
<path d="M26 1011l10 4l9-3l-3 9l6 7l-10 0l-5 8l-3-9l-10-3l8-5z" fill="none" stroke="#d88a96" stroke-width="1.300" stroke-dasharray="3 2" transform="translate(0,-1)"/>
<use href="#lens" x="79" y="1022"/><path d="M66 1022h26M79 1009v26" stroke="#1f4560" stroke-width="2.600"/><circle cx="79" cy="1022" r="4.500" fill="url(#gnode)" stroke="#6a9a3a"/>
<use href="#dda" x="111" y="1022"/>
<path d="M131 1010v24M143 1022v12M155 1022v12M131 1010h12M131 1022h12" fill="none" stroke="#2a4a7a" stroke-width="1.600"/><path d="M143 1010h12v12h-12z" fill="none" stroke="#e02020" stroke-width="1.800"/>
<circle cx="131" cy="1010" r="2.300" fill="#fff" stroke="#7ac04a" stroke-width="1.400"/>
<circle cx="131" cy="1022" r="2.300" fill="#fff" stroke="#7ac04a" stroke-width="1.400"/>
<circle cx="143" cy="1010" r="2.300" fill="#fff" stroke="#e02020" stroke-width="1.400"/>
<circle cx="155" cy="1010" r="2.300" fill="#fff" stroke="#e02020" stroke-width="1.400"/>
<circle cx="143" cy="1022" r="2.300" fill="#fff" stroke="#e02020" stroke-width="1.400"/>
<circle cx="155" cy="1022" r="2.300" fill="#fff" stroke="#e02020" stroke-width="1.400"/>
<use href="#lens" x="188.500" y="1022"/><path d="M178 1022h21" stroke="#1f4560" stroke-width="2.600"/><circle cx="178" cy="1022" r="3.300" fill="url(#gnode)" stroke="#6a9a3a"/><circle cx="199" cy="1022" r="3.300" fill="url(#gnode)" stroke="#6a9a3a"/>
<use href="#dda" x="220.500" y="1022"/>
<use href="#lens" x="252.500" y="1022"/><path d="M248 1009.500v25M257 1009.500v25" stroke="#1f4560" stroke-width="3"/>
<use href="#lens" x="298" y="1022"/><path d="M285.500 1017.500h25M285.500 1026.500h25" stroke="#1f4560" stroke-width="3"/>
<use href="#lens" x="340.500" y="1022"/><path d="M327 1022h27M340.500 1008.500v13M340.500 1022l-9 10" stroke="#1f4560" stroke-width="2.600"/><circle cx="340.500" cy="1022" r="4" fill="url(#gnode)" stroke="#6a9a3a"/>
<use href="#lens" x="386" y="1022"/><path d="M373 1017h26M373 1027h26M381 1009v26M391 1009v26" stroke="#1f4560" stroke-width="2.400"/>
<use href="#dda" x="418.500" y="1022"/>
<use href="#lens" x="452.500" y="1022"/><text x="441" y="1030" font-family="Liberation Sans, sans-serif" font-size="21" fill="#2a2c58" textLength="23" lengthAdjust="spacingAndGlyphs">EF</text>
<use href="#dda" x="485" y="1022"/>
<use href="#lens" x="519" y="1022"/><path d="M509 1011l20 21" stroke="#1f4560" stroke-width="4.500"/><path d="M514 1016.500l7 7" stroke="#e02020" stroke-width="2.600"/><path d="M521 1023.500l4 4.500" stroke="#f0d020" stroke-width="2.600"/><path d="M525 1028l3 3" stroke="#2a9a3a" stroke-width="2.600"/>
<use href="#dda" x="550.500" y="1022"/>
<path d="M568 1030l17-6l12 4l-17 6z" fill="#c8d88a" stroke="#7a8c48" stroke-width=".8"/><path d="M568 1030v3l12 4v-3zM580 1034v3l17-6v-3z" fill="#98ac5c" stroke="#7a8c48" stroke-width=".5"/><path d="M569.500 1015l7-5.500v20l-7 3z" fill="#2c3f8c"/><path d="M576.500 1009.500l4 1.500v18l-4 1z" fill="#8a9cd8"/><path d="M569.500 1015l7-5.500l4 1.500" fill="none" stroke="#1c2a66" stroke-width=".8"/><rect x="586" y="1017" width="3.500" height="12" rx="1.500" fill="#d0344f" stroke="#8a1a2c" stroke-width=".6"/>
<defs><linearGradient id="gfun" x1="0" y1="0" x2="1" y2="0"><stop offset="0" stop-color="#8fa8b0"/><stop offset=".5" stop-color="#f0f6f8"/><stop offset="1" stop-color="#7f98a2"/></linearGradient></defs><path d="M612 1010h29l-12 14v9l-5 1v-10z" fill="url(#gfun)" stroke="#5a7884" stroke-width="1"/><ellipse cx="626.500" cy="1010.500" rx="14.500" ry="2" fill="#dfeaee" stroke="#5a7884" stroke-width=".8"/>
<rect x="660" y="1007.500" width="12" height="13" fill="none" stroke="#2a6ac8" stroke-width="1.800"/><rect x="660" y="1021.500" width="12" height="13" fill="none" stroke="#d81a6a" stroke-width="1.800"/><path d="M660 1021h12" stroke="#2a2a6a" stroke-width="1.500"/><path d="M678 1013c7 4 7 12 0 16" fill="none" stroke="#3a9a3a" stroke-width="1.300"/><path d="M675 1012l5-2.500v5zM675 1030l5 2.500v-5z" fill="#3a9a3a"/>
<path d="M703.500 1027v8M715.500 1027v8M727.500 1015v20M715.500 1015h12M715.500 1027h12" fill="none" stroke="#2a3a6a" stroke-width="1.600"/><rect x="703.500" y="1015" width="12" height="12" fill="none" stroke="#e02020" stroke-width="1.800"/><path d="M713 1018c-1-10 12-12 14-3" fill="none" stroke="#e02020" stroke-width="2"/><path d="M709 1018h9l-4.500 6z" fill="#b01818"/>
<circle cx="703.5" cy="1015" r="2.100" fill="#fff" stroke="#e02020" stroke-width="1.300"/>
<circle cx="715.5" cy="1015" r="2.100" fill="#fff" stroke="#e02020" stroke-width="1.300"/>
<circle cx="703.5" cy="1027" r="2.100" fill="#fff" stroke="#e02020" stroke-width="1.300"/>
<circle cx="715.5" cy="1027" r="2.100" fill="#fff" stroke="#e02020" stroke-width="1.300"/>
<circle cx="727.5" cy="1015" r="2.100" fill="#fff" stroke="#7ac04a" stroke-width="1.300"/>
<circle cx="727.5" cy="1027" r="2.100" fill="#fff" stroke="#7ac04a" stroke-width="1.300"/>
<path d="M758 1006.500c1.500-1 3-1 3.500 0l.5 14l2.500 3v2h-9.500v-2l2.500-3z" fill="#3aa04a" stroke="#1f6a2a" stroke-width=".7"/><rect x="755" y="1025" width="10" height="2" fill="#555"/><path d="M755 1027l-3 8h15l-2-8z" fill="#e8ecd0" stroke="#a8ac88" stroke-width=".6"/><path d="M756 1028l-1 6M759 1028v6M762 1028l1 6" stroke="#a8ac88" stroke-width=".6"/><path d="M743 1035.500h22" stroke="#e6e6e6" stroke-width="1.600"/>
<path d="M784.500 1008v29" stroke="#3a3a3a" stroke-width="1"/><path d="M785.500 1008v29" stroke="#f0f0f0" stroke-width="1"/>
<rect x="805" y="1007.500" width="12" height="13" fill="none" stroke="#2a6ac8" stroke-width="1.800"/><rect x="805" y="1021.500" width="12" height="13" fill="none" stroke="#d81a6a" stroke-width="1.800"/><path d="M805 1021h12" stroke="#2a2a6a" stroke-width="1.500"/><path d="M802 1006.500l18 13M820 1006.500l-18 13" stroke="#2a7a3a" stroke-width="1.200"/>
<g opacity=".45"><path d="M844 1010v25h22" fill="none" stroke="#555" stroke-width="1.200"/><path d="M844 1008l-2.500 5h5zM868 1035l-5-2.500v5z" fill="#555"/><rect x="853" y="1009" width="9" height="9" fill="none" stroke="#2a8ac8" stroke-width="1.500"/><rect x="853" y="1019" width="9" height="9" fill="none" stroke="#d81a6a" stroke-width="1.500"/><path d="M851 1008l13 10M864 1008l-13 10" stroke="#2a7a3a" stroke-width="1"/></g>
<rect x="893.500" y="1007.500" width="12" height="13" fill="none" stroke="#2a6ac8" stroke-width="1.800"/><rect x="893.500" y="1021.500" width="12" height="13" fill="none" stroke="#d81a6a" stroke-width="1.800"/><path d="M893.500 1021h12" stroke="#2a2a6a" stroke-width="1.500"/><path d="M890.500 1021.500l18 13M908.500 1021.500l-18 13" stroke="#2a7a3a" stroke-width="1.200"/>
<g opacity=".5"><path d="M935 1024c-1-9 10-13 15-6" fill="none" stroke="#6a5ab0" stroke-width="3"/><path d="M931 1023h9l-4.500 6z" fill="#6a5ab0"/><rect x="941" y="1021" width="12" height="13" fill="none" stroke="#d81a6a" stroke-width="1.600"/><path d="M937 1007l18 13M955 1007l-14 12" stroke="#5aa08a" stroke-width="1"/></g>
<g fill="none" stroke="#3a4a6a" stroke-width="1.600"><path d="M975.500 1035v-20l7-7h17v20l-7 7M975.500 1015h17v20M992.500 1015l7-7M982.500 1008v19M975.500 1025h17l7-7M982.500 1027h-7M984 1015v20"/></g>
<g fill="none" stroke="#5a6a7a" stroke-width="1.300"><path d="M1018.500 1035v-20l8-7h17v20l-8 7M1018.500 1015h17v20M1035.500 1015l8-7M1026.500 1008v20M1018.500 1029h17l8-7"/></g><path d="M1018.500 1022l8-5h17l-8 5z" fill="#f0a0a0" stroke="#e02020" stroke-width="1.600"/><path d="M1018.500 1029l8-5h17l-8 5z" fill="#a8c8d8" fill-opacity=".6" stroke="#5a6a7a" stroke-width="1"/>
<path d="M1056.500 1008v29M1153 1008v29" stroke="#3a3a3a" stroke-width="1"/><path d="M1057.500 1008v29M1154 1008v29" stroke="#f0f0f0" stroke-width="1"/>
<path d="M1086 1024l11 9" stroke="#222" stroke-width="4" stroke-linecap="round"/><circle cx="1080" cy="1017" r="9.500" fill="#cfe2f8" stroke="#e8eef4" stroke-width="2.400"/><circle cx="1080" cy="1017" r="9.500" fill="none" stroke="#7a98c0" stroke-width=".8"/><circle cx="1078" cy="1014" r="4" fill="#fff" opacity=".6"/>
<path d="M1130 1024l11 9" stroke="#222" stroke-width="4" stroke-linecap="round"/><circle cx="1124" cy="1017" r="9.500" fill="#cfe2f8" stroke="#e8eef4" stroke-width="2.400"/><circle cx="1124" cy="1017" r="9.500" fill="none" stroke="#7a98c0" stroke-width=".8"/><circle cx="1122" cy="1014" r="4" fill="#fff" opacity=".6"/>
<path d="M1125 1011l13 12M1138 1011l-13 12" stroke="#e01818" stroke-width="3.600"/>
<path d="M1165 1012l7-5l14 15l-7 6z" fill="#6a6a72" stroke="#3a3a42" stroke-width=".8"/><path d="M1178 1029c-2-6 4-12 10-10l6 8v8z" fill="#e04a1a"/><path d="M1178 1030c0-6 6-10 12-8l4 5v8h-14z" fill="#ffd21a"/><path d="M1182 1035c0-5 4-8 9-7l3 3v4z" fill="#fff27a"/>
<text x="1217" y="1023.500" font-family="Liberation Serif, serif" font-style="italic" font-weight="bold" font-size="19" fill="#1f2f5a">L</text><path d="M1214 1027.500h22" stroke="#4a6a9a" stroke-width="1" stroke-dasharray="1.500 1.500"/><circle cx="1212" cy="1027.500" r="2" fill="#bfe09a" stroke="#4a9a3a" stroke-width=".8"/><circle cx="1238" cy="1027.500" r="2" fill="#bfe09a" stroke="#4a9a3a" stroke-width=".8"/>
<use href="#dda" x="1257" y="1022"/>
<g transform="translate(0,-2)"><path d="M1279 1037l2.500-8l17-19l5 5l-17 19z" fill="#f6b21a" stroke="#a87808" stroke-width=".6"/><path d="M1298.500 1010l2-2.200c1-1 2-1 3 0l2 2c1 1 1 2 0 3l-2 2.200z" fill="#e88aa0"/><path d="M1279 1037l2.500-8l5 5z" fill="#f0d8b0"/><path d="M1279 1037l1-3.200l2 2z" fill="#222"/></g>
<path d="M1320 1008v30" stroke="#c8c8c8" stroke-width="2"/><path d="M1321 1008c8-3 14 3 26-1l-3 10l4 9c-10 4-18-2-27 1z" fill="#e02a1a" stroke="#a01808" stroke-width=".6"/><g transform="translate(0,-1.500)"><path d="M1322 1037l2-7l14-16l4.500 4.500l-14 16z" fill="#f6b21a" stroke="#a87808" stroke-width=".6"/><path d="M1322 1037l2-7l4.500 4.500z" fill="#f0d8b0"/><path d="M1322 1037l.8-2.800l1.800 1.800z" fill="#222"/></g>
<path d="M1396 1035L1396.0 1012.0" stroke="#e01818" stroke-width="1.6"/><path d="M1396 1007L1398.2 1012.0L1393.8 1012.0z" fill="#e01818"/><path d="M1396 1035L1420.0 1035.0" stroke="#1a9a3a" stroke-width="1.6"/><path d="M1425 1035L1420.0 1037.2L1420.0 1032.8z" fill="#1a9a3a"/><path d="M1396 1035L1413.4 1018.4" stroke="#2a2a9a" stroke-width="1.6"/><path d="M1417 1015L1414.9 1020.1L1411.8 1016.8z" fill="#2a2a9a"/>
<path d="M1453 1035L1453.0 1014.0" stroke="#e01818" stroke-width="1.4"/><path d="M1453 1008L1455.7 1014.0L1450.3 1014.0z" fill="#e01818"/><path d="M1453 1035L1464.5 1029.2" stroke="#1a9a3a" stroke-width="1.4"/><path d="M1469 1027L1465.5 1031.2L1463.5 1027.2z" fill="#1a9a3a"/><path d="M1453 1035L1441.5 1029.2" stroke="#2a2a9a" stroke-width="1.4"/><path d="M1437 1027L1442.5 1027.2L1440.5 1031.2z" fill="#2a2a9a"/>
<text x="1457" y="1016" font-family="Liberation Sans, sans-serif" font-size="9" fill="#222">Z</text><text x="1438" y="1025" font-family="Liberation Sans, sans-serif" font-size="9" fill="#222">Y</text><text x="1463" y="1025" font-family="Liberation Sans, sans-serif" font-size="9" fill="#222">X</text>
<path d="M1485 1035L1485.0 1012.0" stroke="#e01818" stroke-width="1.6"/><path d="M1485 1007L1487.2 1012.0L1482.8 1012.0z" fill="#e01818"/><path d="M1485 1035L1509.0 1035.0" stroke="#1a9a3a" stroke-width="1.6"/><path d="M1514 1035L1509.0 1037.2L1509.0 1032.8z" fill="#1a9a3a"/><circle cx="1485" cy="1035" r="1.800" fill="#2a2a9a"/>
<text x="1490.5" y="1027" font-family="Liberation Sans, sans-serif" font-size="13.500" fill="#3a3a3a" textLength="18" lengthAdjust="spacingAndGlyphs">XZ</text>
<path d="M1551.5 1035L1551.5 1012.0" stroke="#2a2a9a" stroke-width="1.6"/><path d="M1551.5 1007L1553.8 1012.0L1549.2 1012.0z" fill="#2a2a9a"/><path d="M1551.5 1035L1575.5 1035.0" stroke="#1a9a3a" stroke-width="1.6"/><path d="M1580.5 1035L1575.5 1037.2L1575.5 1032.8z" fill="#1a9a3a"/><circle cx="1551.5" cy="1035" r="1.800" fill="#e01818"/>
<text x="1557.0" y="1027" font-family="Liberation Sans, sans-serif" font-size="13.500" fill="#3a3a3a" textLength="18" lengthAdjust="spacingAndGlyphs">XY</text>
<path d="M1617.5 1035L1617.5 1012.0" stroke="#e01818" stroke-width="1.6"/><path d="M1617.5 1007L1619.8 1012.0L1615.2 1012.0z" fill="#e01818"/><path d="M1617.5 1035L1641.5 1035.0" stroke="#2a2a9a" stroke-width="1.6"/><path d="M1646.5 1035L1641.5 1037.2L1641.5 1032.8z" fill="#2a2a9a"/><circle cx="1617.5" cy="1035" r="1.800" fill="#1a9a3a"/>
<text x="1623.0" y="1027" font-family="Liberation Sans, sans-serif" font-size="13.500" fill="#3a3a3a" textLength="18" lengthAdjust="spacingAndGlyphs">YZ</text>
<use href="#dda" x="1531" y="1022"/><use href="#dda" x="1597" y="1022"/><use href="#dda" x="1663" y="1022"/><use href="#dda" x="1772.500" y="1022"/>
<path d="M1687 1014h23l-7 19h-23z" fill="#dfeaf6"/><path d="M1688 1019h20M1684 1027h20M1692 1014l-6 19M1701 1014l-6 19" stroke="#1f2f5a" stroke-width="1.800" fill="none"/>
<path d="M1748 1011c8 6 8 18-2 22c-8 3-16-3-15-12" fill="none" stroke="#24387a" stroke-width="2.600"/><path d="M1726 1020l5.500-7l5 8z" fill="#24387a"/>
<path d="M1792 1035L1792.0 1012.0" stroke="#e01818" stroke-width="1.6"/><path d="M1792 1007L1794.2 1012.0L1789.8 1012.0z" fill="#e01818"/><path d="M1792 1035L1816.0 1035.0" stroke="#e01818" stroke-width="1.6"/><path d="M1821 1035L1816.0 1037.2L1816.0 1032.8z" fill="#e01818"/><path d="M1792 1035L1809.4 1018.4" stroke="#e01818" stroke-width="1.6"/><path d="M1813 1015L1810.9 1020.1L1807.8 1016.8z" fill="#e01818"/>
<g transform="translate(0,3.500)"><path d="M1343 1054l5-3v2c5 0 8 2 8 5h-2c0-2-2-3-6-3v2z" fill="#4a9a3a"/><path d="M1343 1062l2-5l9-8l3 3l-9 8z" fill="#f6c21a" stroke="#a87808" stroke-width=".5"/><path d="M1354 1049l1.500-1.300l3 3l-1.500 1.300z" fill="#e88a8a"/><text x="1348" y="1063" font-family="Liberation Sans, sans-serif" font-size="10" font-weight="bold" fill="#444">№</text></g>
<path d="M1368 1063l6.500-8l6.500 8z" fill="#3a9a3a" stroke="#1f6a2a" stroke-width=".6"/><path d="M1391.500 1055.500h13l-4 8.500h-5z" fill="#9a9a9a"/>
<path d="M1456 1056h6l-3 3.500z" fill="#333"/><path d="M1541 1056h6l-3 3.500z" fill="#333"/>
<path d="M1478 1066l8-11l2.500 2l-8 11z" fill="#f0b828" stroke="#a87808" stroke-width=".5"/><path d="M1482 1053c3-3 8-3 11 0l1 3l-2 1l-1-2c-1-1-2-1-3 0l-2-1.500z" fill="#d0d2d8" stroke="#6e7078" stroke-width=".6"/>
</svg>
</div>
</body>
</html>
